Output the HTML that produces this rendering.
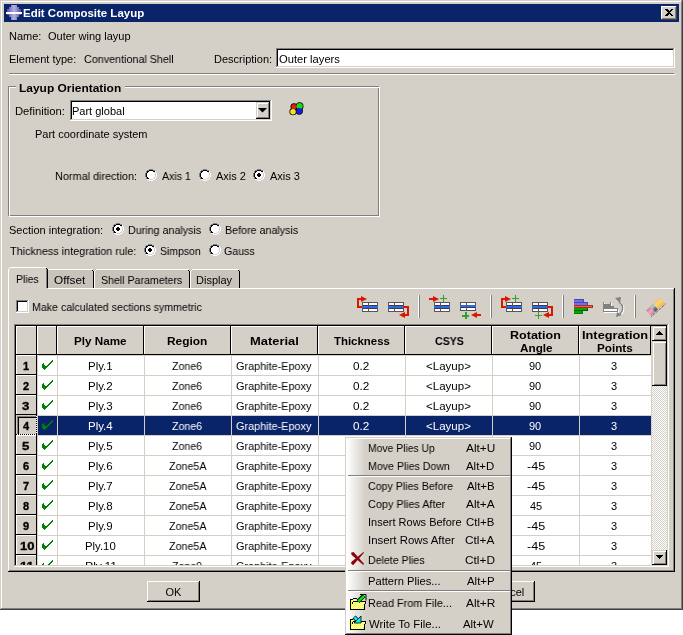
<!DOCTYPE html>
<html><head><meta charset="utf-8"><style>
html,body{margin:0;padding:0;background:#fff;}
body{width:683px;height:635px;position:relative;overflow:hidden;}
body div, body svg{position:absolute;}
.t{will-change:transform;font-family:"Liberation Sans",sans-serif;font-size:11px;line-height:13px;white-space:nowrap;color:#000;}
</style></head><body>
<div style="left:0px;top:0px;width:683px;height:610px;background:#d4d0c8;"></div>
<div style="left:0px;top:0px;width:683px;height:1px;background:#d4d0c8;"></div>
<div style="left:0px;top:0px;width:1px;height:610px;background:#d4d0c8;"></div>
<div style="left:1px;top:1px;width:681px;height:1px;background:#ffffff;"></div>
<div style="left:1px;top:1px;width:1px;height:608px;background:#ffffff;"></div>
<div style="left:0px;top:609px;width:683px;height:1px;background:#404040;"></div>
<div style="left:682px;top:0px;width:1px;height:610px;background:#404040;"></div>
<div style="left:1px;top:608px;width:681px;height:1px;background:#808080;"></div>
<div style="left:681px;top:1px;width:1px;height:608px;background:#808080;"></div>
<div style="left:4px;top:4px;width:675px;height:18px;background:#0a246a;"></div>
<div class="t" style="left:22.96px;top:7px;font-weight:bold;transform:scaleX(1.0435);transform-origin:0 0;color:#fff;">Edit Composite Layup</div>
<svg style="left:6px;top:5px" width="16" height="16" viewBox="0 0 16 16" shape-rendering="crispEdges"><defs><linearGradient id="pg" x1="0" x2="1"><stop offset="0" stop-color="#50509a"/><stop offset="0.5" stop-color="#b8b0e8"/><stop offset="1" stop-color="#50509a"/></linearGradient></defs><polygon points="5,0 11,0 11,2 13,2 13,4 15,4 15,10 13,10 13,12 11,12 11,15 5,15 5,12 3,12 3,10 1,10 1,4 3,4 3,2 5,2" fill="url(#pg)"/><rect x="0" y="7" width="16" height="2" fill="#fff"/></svg>
<div style="left:661px;top:6px;width:16px;height:14px;background:#d4d0c8;"></div>
<div style="left:661px;top:6px;width:16px;height:1px;background:#ffffff;"></div>
<div style="left:661px;top:6px;width:1px;height:14px;background:#ffffff;"></div>
<div style="left:662px;top:7px;width:14px;height:1px;background:#d4d0c8;"></div>
<div style="left:662px;top:7px;width:1px;height:12px;background:#d4d0c8;"></div>
<div style="left:661px;top:19px;width:16px;height:1px;background:#404040;"></div>
<div style="left:676px;top:6px;width:1px;height:14px;background:#404040;"></div>
<div style="left:662px;top:18px;width:14px;height:1px;background:#808080;"></div>
<div style="left:675px;top:7px;width:1px;height:12px;background:#808080;"></div>
<svg style="left:665px;top:9px" width="8" height="7" viewBox="0 0 8 7" shape-rendering="crispEdges"><path d="M0 0h2l2 2 2-2h2v1l-3 2.5 3 2.5v1h-2l-2-2-2 2h-2v-1l3-2.5-3-2.5z" fill="#000"/></svg>
<div class="t" style="left:9px;top:30px;">Name:</div>
<div class="t" style="left:48px;top:30px;">Outer wing layup</div>
<div class="t" style="left:9px;top:53px;">Element type:</div>
<div class="t" style="left:84.02px;top:53px;transform:scaleX(0.9778);transform-origin:0 0;">Conventional Shell</div>
<div class="t" style="left:214px;top:53px;">Description:</div>
<div style="left:276px;top:48px;width:399px;height:20px;background:#ffffff;"></div>
<div style="left:276px;top:48px;width:399px;height:1px;background:#808080;"></div>
<div style="left:276px;top:48px;width:1px;height:20px;background:#808080;"></div>
<div style="left:277px;top:49px;width:397px;height:1px;background:#000000;"></div>
<div style="left:277px;top:49px;width:1px;height:18px;background:#000000;"></div>
<div style="left:276px;top:67px;width:399px;height:1px;background:#ffffff;"></div>
<div style="left:674px;top:48px;width:1px;height:20px;background:#ffffff;"></div>
<div style="left:277px;top:66px;width:397px;height:1px;background:#d4d0c8;"></div>
<div style="left:673px;top:49px;width:1px;height:18px;background:#d4d0c8;"></div>
<div class="t" style="left:278.98px;top:53px;transform:scaleX(1.0169);transform-origin:0 0;">Outer layers</div>
<div style="left:9px;top:73px;width:665px;height:1px;background:#808080;"></div>
<div style="left:9px;top:74px;width:666px;height:1px;background:#ffffff;"></div>
<div style="left:8px;top:86px;width:371px;height:1px;background:#808080;"></div>
<div style="left:8px;top:86px;width:1px;height:130px;background:#808080;"></div>
<div style="left:8px;top:215px;width:371px;height:1px;background:#808080;"></div>
<div style="left:378px;top:86px;width:1px;height:130px;background:#808080;"></div>
<div style="left:9px;top:87px;width:371px;height:1px;background:#ffffff;"></div>
<div style="left:9px;top:87px;width:1px;height:130px;background:#ffffff;"></div>
<div style="left:9px;top:216px;width:371px;height:1px;background:#ffffff;"></div>
<div style="left:379px;top:87px;width:1px;height:130px;background:#ffffff;"></div>
<div style="left:16px;top:80px;width:109px;height:12px;background:#d4d0c8;"></div>
<div class="t" style="left:18.91px;top:82px;font-weight:bold;transform:scaleX(1.0860);transform-origin:0 0;">Layup Orientation</div>
<div class="t" style="left:14.98px;top:105px;transform:scaleX(1.0213);transform-origin:0 0;">Definition:</div>
<div style="left:70px;top:100px;width:202px;height:21px;background:#ffffff;"></div>
<div style="left:70px;top:100px;width:202px;height:1px;background:#808080;"></div>
<div style="left:70px;top:100px;width:1px;height:21px;background:#808080;"></div>
<div style="left:71px;top:101px;width:200px;height:1px;background:#000000;"></div>
<div style="left:71px;top:101px;width:1px;height:19px;background:#000000;"></div>
<div style="left:70px;top:120px;width:202px;height:1px;background:#ffffff;"></div>
<div style="left:271px;top:100px;width:1px;height:21px;background:#ffffff;"></div>
<div style="left:71px;top:119px;width:200px;height:1px;background:#d4d0c8;"></div>
<div style="left:270px;top:101px;width:1px;height:19px;background:#d4d0c8;"></div>
<div class="t" style="left:72px;top:105px;">Part global</div>
<div style="left:256px;top:102px;width:14px;height:17px;background:#d4d0c8;"></div>
<div style="left:256px;top:102px;width:14px;height:1px;background:#d4d0c8;"></div>
<div style="left:256px;top:102px;width:1px;height:17px;background:#d4d0c8;"></div>
<div style="left:257px;top:103px;width:12px;height:1px;background:#ffffff;"></div>
<div style="left:257px;top:103px;width:1px;height:15px;background:#ffffff;"></div>
<div style="left:256px;top:118px;width:14px;height:1px;background:#000000;"></div>
<div style="left:269px;top:102px;width:1px;height:17px;background:#000000;"></div>
<div style="left:257px;top:117px;width:12px;height:1px;background:#808080;"></div>
<div style="left:268px;top:103px;width:1px;height:15px;background:#808080;"></div>
<svg style="left:258px;top:108px" width="9" height="5" viewBox="0 0 9 5" shape-rendering="crispEdges"><polygon points="0,0 9,0 4.5,4.5" fill="#000" shape-rendering="geometricPrecision"/></svg>
<svg style="left:288px;top:101px" width="17" height="16" viewBox="0 0 17 16" shape-rendering="crispEdges"><g shape-rendering="geometricPrecision"><circle cx="6" cy="5.8" r="3.5" fill="#000"/><circle cx="11.6" cy="5.2" r="3.9" fill="#000"/><circle cx="5" cy="10.7" r="3.6" fill="#000"/><circle cx="11.2" cy="10" r="3.7" fill="#000"/><circle cx="6" cy="5.8" r="2.7" fill="#e81818"/><circle cx="11.6" cy="5.2" r="3.1" fill="#10e010"/><circle cx="5" cy="10.7" r="2.8" fill="#f0e818"/><circle cx="11.2" cy="10" r="2.9" fill="#1818f0"/></g></svg>
<div class="t" style="left:35px;top:128px;">Part coordinate system</div>
<div class="t" style="left:55.01px;top:170px;transform:scaleX(0.9877);transform-origin:0 0;">Normal direction:</div>
<svg style="left:145px;top:169px" width="12" height="12" viewBox="0 0 12 12" shape-rendering="crispEdges"><g><rect x="4" y="2" width="4" height="1" fill="#ffffff"/><rect x="3" y="3" width="6" height="1" fill="#ffffff"/><rect x="2" y="4" width="8" height="1" fill="#ffffff"/><rect x="2" y="5" width="8" height="1" fill="#ffffff"/><rect x="2" y="6" width="8" height="1" fill="#ffffff"/><rect x="2" y="7" width="8" height="1" fill="#ffffff"/><rect x="3" y="8" width="6" height="1" fill="#ffffff"/><rect x="4" y="9" width="4" height="1" fill="#ffffff"/><rect x="4" y="0" width="4" height="1" fill="#808080"/><rect x="2" y="1" width="2" height="1" fill="#808080"/><rect x="1" y="2" width="1" height="1" fill="#808080"/><rect x="1" y="3" width="1" height="1" fill="#808080"/><rect x="0" y="4" width="1" height="1" fill="#808080"/><rect x="0" y="5" width="1" height="1" fill="#808080"/><rect x="0" y="6" width="1" height="1" fill="#808080"/><rect x="0" y="7" width="1" height="1" fill="#808080"/><rect x="8" y="1" width="2" height="1" fill="#808080"/><rect x="1" y="8" width="1" height="1" fill="#808080"/><rect x="1" y="9" width="1" height="1" fill="#808080"/><rect x="4" y="11" width="4" height="1" fill="#ffffff"/><rect x="8" y="10" width="2" height="1" fill="#ffffff"/><rect x="10" y="9" width="1" height="1" fill="#ffffff"/><rect x="10" y="8" width="1" height="1" fill="#ffffff"/><rect x="11" y="7" width="1" height="1" fill="#ffffff"/><rect x="11" y="6" width="1" height="1" fill="#ffffff"/><rect x="11" y="5" width="1" height="1" fill="#ffffff"/><rect x="11" y="4" width="1" height="1" fill="#ffffff"/><rect x="10" y="3" width="1" height="1" fill="#ffffff"/><rect x="10" y="2" width="1" height="1" fill="#ffffff"/><rect x="2" y="10" width="2" height="1" fill="#ffffff"/><rect x="4" y="1" width="4" height="1" fill="#000000"/><rect x="2" y="2" width="2" height="1" fill="#000000"/><rect x="8" y="2" width="2" height="1" fill="#000000"/><rect x="2" y="3" width="1" height="1" fill="#000000"/><rect x="1" y="4" width="1" height="1" fill="#000000"/><rect x="1" y="5" width="1" height="1" fill="#000000"/><rect x="1" y="6" width="1" height="1" fill="#000000"/><rect x="1" y="7" width="1" height="1" fill="#000000"/><rect x="2" y="8" width="1" height="1" fill="#000000"/><rect x="2" y="9" width="2" height="1" fill="#000000"/><rect x="4" y="10" width="4" height="1" fill="#d4d0c8"/><rect x="8" y="9" width="2" height="1" fill="#d4d0c8"/><rect x="9" y="8" width="1" height="1" fill="#d4d0c8"/><rect x="10" y="7" width="1" height="1" fill="#d4d0c8"/><rect x="10" y="6" width="1" height="1" fill="#d4d0c8"/><rect x="10" y="5" width="1" height="1" fill="#d4d0c8"/><rect x="10" y="4" width="1" height="1" fill="#d4d0c8"/><rect x="9" y="3" width="1" height="1" fill="#d4d0c8"/></g></svg>
<div class="t" style="left:162.00px;top:170px;transform:scaleX(0.9655);transform-origin:0 0;">Axis 1</div>
<svg style="left:199px;top:169px" width="12" height="12" viewBox="0 0 12 12" shape-rendering="crispEdges"><g><rect x="4" y="2" width="4" height="1" fill="#ffffff"/><rect x="3" y="3" width="6" height="1" fill="#ffffff"/><rect x="2" y="4" width="8" height="1" fill="#ffffff"/><rect x="2" y="5" width="8" height="1" fill="#ffffff"/><rect x="2" y="6" width="8" height="1" fill="#ffffff"/><rect x="2" y="7" width="8" height="1" fill="#ffffff"/><rect x="3" y="8" width="6" height="1" fill="#ffffff"/><rect x="4" y="9" width="4" height="1" fill="#ffffff"/><rect x="4" y="0" width="4" height="1" fill="#808080"/><rect x="2" y="1" width="2" height="1" fill="#808080"/><rect x="1" y="2" width="1" height="1" fill="#808080"/><rect x="1" y="3" width="1" height="1" fill="#808080"/><rect x="0" y="4" width="1" height="1" fill="#808080"/><rect x="0" y="5" width="1" height="1" fill="#808080"/><rect x="0" y="6" width="1" height="1" fill="#808080"/><rect x="0" y="7" width="1" height="1" fill="#808080"/><rect x="8" y="1" width="2" height="1" fill="#808080"/><rect x="1" y="8" width="1" height="1" fill="#808080"/><rect x="1" y="9" width="1" height="1" fill="#808080"/><rect x="4" y="11" width="4" height="1" fill="#ffffff"/><rect x="8" y="10" width="2" height="1" fill="#ffffff"/><rect x="10" y="9" width="1" height="1" fill="#ffffff"/><rect x="10" y="8" width="1" height="1" fill="#ffffff"/><rect x="11" y="7" width="1" height="1" fill="#ffffff"/><rect x="11" y="6" width="1" height="1" fill="#ffffff"/><rect x="11" y="5" width="1" height="1" fill="#ffffff"/><rect x="11" y="4" width="1" height="1" fill="#ffffff"/><rect x="10" y="3" width="1" height="1" fill="#ffffff"/><rect x="10" y="2" width="1" height="1" fill="#ffffff"/><rect x="2" y="10" width="2" height="1" fill="#ffffff"/><rect x="4" y="1" width="4" height="1" fill="#000000"/><rect x="2" y="2" width="2" height="1" fill="#000000"/><rect x="8" y="2" width="2" height="1" fill="#000000"/><rect x="2" y="3" width="1" height="1" fill="#000000"/><rect x="1" y="4" width="1" height="1" fill="#000000"/><rect x="1" y="5" width="1" height="1" fill="#000000"/><rect x="1" y="6" width="1" height="1" fill="#000000"/><rect x="1" y="7" width="1" height="1" fill="#000000"/><rect x="2" y="8" width="1" height="1" fill="#000000"/><rect x="2" y="9" width="2" height="1" fill="#000000"/><rect x="4" y="10" width="4" height="1" fill="#d4d0c8"/><rect x="8" y="9" width="2" height="1" fill="#d4d0c8"/><rect x="9" y="8" width="1" height="1" fill="#d4d0c8"/><rect x="10" y="7" width="1" height="1" fill="#d4d0c8"/><rect x="10" y="6" width="1" height="1" fill="#d4d0c8"/><rect x="10" y="5" width="1" height="1" fill="#d4d0c8"/><rect x="10" y="4" width="1" height="1" fill="#d4d0c8"/><rect x="9" y="3" width="1" height="1" fill="#d4d0c8"/></g></svg>
<div class="t" style="left:216.00px;top:170px;transform:scaleX(1.0000);transform-origin:0 0;">Axis 2</div>
<svg style="left:253px;top:169px" width="12" height="12" viewBox="0 0 12 12" shape-rendering="crispEdges"><g><rect x="4" y="2" width="4" height="1" fill="#ffffff"/><rect x="3" y="3" width="6" height="1" fill="#ffffff"/><rect x="2" y="4" width="8" height="1" fill="#ffffff"/><rect x="2" y="5" width="8" height="1" fill="#ffffff"/><rect x="2" y="6" width="8" height="1" fill="#ffffff"/><rect x="2" y="7" width="8" height="1" fill="#ffffff"/><rect x="3" y="8" width="6" height="1" fill="#ffffff"/><rect x="4" y="9" width="4" height="1" fill="#ffffff"/><rect x="4" y="0" width="4" height="1" fill="#808080"/><rect x="2" y="1" width="2" height="1" fill="#808080"/><rect x="1" y="2" width="1" height="1" fill="#808080"/><rect x="1" y="3" width="1" height="1" fill="#808080"/><rect x="0" y="4" width="1" height="1" fill="#808080"/><rect x="0" y="5" width="1" height="1" fill="#808080"/><rect x="0" y="6" width="1" height="1" fill="#808080"/><rect x="0" y="7" width="1" height="1" fill="#808080"/><rect x="8" y="1" width="2" height="1" fill="#808080"/><rect x="1" y="8" width="1" height="1" fill="#808080"/><rect x="1" y="9" width="1" height="1" fill="#808080"/><rect x="4" y="11" width="4" height="1" fill="#ffffff"/><rect x="8" y="10" width="2" height="1" fill="#ffffff"/><rect x="10" y="9" width="1" height="1" fill="#ffffff"/><rect x="10" y="8" width="1" height="1" fill="#ffffff"/><rect x="11" y="7" width="1" height="1" fill="#ffffff"/><rect x="11" y="6" width="1" height="1" fill="#ffffff"/><rect x="11" y="5" width="1" height="1" fill="#ffffff"/><rect x="11" y="4" width="1" height="1" fill="#ffffff"/><rect x="10" y="3" width="1" height="1" fill="#ffffff"/><rect x="10" y="2" width="1" height="1" fill="#ffffff"/><rect x="2" y="10" width="2" height="1" fill="#ffffff"/><rect x="4" y="1" width="4" height="1" fill="#000000"/><rect x="2" y="2" width="2" height="1" fill="#000000"/><rect x="8" y="2" width="2" height="1" fill="#000000"/><rect x="2" y="3" width="1" height="1" fill="#000000"/><rect x="1" y="4" width="1" height="1" fill="#000000"/><rect x="1" y="5" width="1" height="1" fill="#000000"/><rect x="1" y="6" width="1" height="1" fill="#000000"/><rect x="1" y="7" width="1" height="1" fill="#000000"/><rect x="2" y="8" width="1" height="1" fill="#000000"/><rect x="2" y="9" width="2" height="1" fill="#000000"/><rect x="4" y="10" width="4" height="1" fill="#d4d0c8"/><rect x="8" y="9" width="2" height="1" fill="#d4d0c8"/><rect x="9" y="8" width="1" height="1" fill="#d4d0c8"/><rect x="10" y="7" width="1" height="1" fill="#d4d0c8"/><rect x="10" y="6" width="1" height="1" fill="#d4d0c8"/><rect x="10" y="5" width="1" height="1" fill="#d4d0c8"/><rect x="10" y="4" width="1" height="1" fill="#d4d0c8"/><rect x="9" y="3" width="1" height="1" fill="#d4d0c8"/><rect x="5" y="4" width="2" height="1" fill="#000000"/><rect x="4" y="5" width="4" height="1" fill="#000000"/><rect x="4" y="6" width="4" height="1" fill="#000000"/><rect x="5" y="7" width="2" height="1" fill="#000000"/></g></svg>
<div class="t" style="left:270.00px;top:170px;transform:scaleX(1.0000);transform-origin:0 0;">Axis 3</div>
<div class="t" style="left:9px;top:224px;">Section integration:</div>
<svg style="left:112px;top:223px" width="12" height="12" viewBox="0 0 12 12" shape-rendering="crispEdges"><g><rect x="4" y="2" width="4" height="1" fill="#ffffff"/><rect x="3" y="3" width="6" height="1" fill="#ffffff"/><rect x="2" y="4" width="8" height="1" fill="#ffffff"/><rect x="2" y="5" width="8" height="1" fill="#ffffff"/><rect x="2" y="6" width="8" height="1" fill="#ffffff"/><rect x="2" y="7" width="8" height="1" fill="#ffffff"/><rect x="3" y="8" width="6" height="1" fill="#ffffff"/><rect x="4" y="9" width="4" height="1" fill="#ffffff"/><rect x="4" y="0" width="4" height="1" fill="#808080"/><rect x="2" y="1" width="2" height="1" fill="#808080"/><rect x="1" y="2" width="1" height="1" fill="#808080"/><rect x="1" y="3" width="1" height="1" fill="#808080"/><rect x="0" y="4" width="1" height="1" fill="#808080"/><rect x="0" y="5" width="1" height="1" fill="#808080"/><rect x="0" y="6" width="1" height="1" fill="#808080"/><rect x="0" y="7" width="1" height="1" fill="#808080"/><rect x="8" y="1" width="2" height="1" fill="#808080"/><rect x="1" y="8" width="1" height="1" fill="#808080"/><rect x="1" y="9" width="1" height="1" fill="#808080"/><rect x="4" y="11" width="4" height="1" fill="#ffffff"/><rect x="8" y="10" width="2" height="1" fill="#ffffff"/><rect x="10" y="9" width="1" height="1" fill="#ffffff"/><rect x="10" y="8" width="1" height="1" fill="#ffffff"/><rect x="11" y="7" width="1" height="1" fill="#ffffff"/><rect x="11" y="6" width="1" height="1" fill="#ffffff"/><rect x="11" y="5" width="1" height="1" fill="#ffffff"/><rect x="11" y="4" width="1" height="1" fill="#ffffff"/><rect x="10" y="3" width="1" height="1" fill="#ffffff"/><rect x="10" y="2" width="1" height="1" fill="#ffffff"/><rect x="2" y="10" width="2" height="1" fill="#ffffff"/><rect x="4" y="1" width="4" height="1" fill="#000000"/><rect x="2" y="2" width="2" height="1" fill="#000000"/><rect x="8" y="2" width="2" height="1" fill="#000000"/><rect x="2" y="3" width="1" height="1" fill="#000000"/><rect x="1" y="4" width="1" height="1" fill="#000000"/><rect x="1" y="5" width="1" height="1" fill="#000000"/><rect x="1" y="6" width="1" height="1" fill="#000000"/><rect x="1" y="7" width="1" height="1" fill="#000000"/><rect x="2" y="8" width="1" height="1" fill="#000000"/><rect x="2" y="9" width="2" height="1" fill="#000000"/><rect x="4" y="10" width="4" height="1" fill="#d4d0c8"/><rect x="8" y="9" width="2" height="1" fill="#d4d0c8"/><rect x="9" y="8" width="1" height="1" fill="#d4d0c8"/><rect x="10" y="7" width="1" height="1" fill="#d4d0c8"/><rect x="10" y="6" width="1" height="1" fill="#d4d0c8"/><rect x="10" y="5" width="1" height="1" fill="#d4d0c8"/><rect x="10" y="4" width="1" height="1" fill="#d4d0c8"/><rect x="9" y="3" width="1" height="1" fill="#d4d0c8"/><rect x="5" y="4" width="2" height="1" fill="#000000"/><rect x="4" y="5" width="4" height="1" fill="#000000"/><rect x="4" y="6" width="4" height="1" fill="#000000"/><rect x="5" y="7" width="2" height="1" fill="#000000"/></g></svg>
<div class="t" style="left:128.03px;top:224px;transform:scaleX(0.9730);transform-origin:0 0;">During analysis</div>
<svg style="left:209px;top:223px" width="12" height="12" viewBox="0 0 12 12" shape-rendering="crispEdges"><g><rect x="4" y="2" width="4" height="1" fill="#ffffff"/><rect x="3" y="3" width="6" height="1" fill="#ffffff"/><rect x="2" y="4" width="8" height="1" fill="#ffffff"/><rect x="2" y="5" width="8" height="1" fill="#ffffff"/><rect x="2" y="6" width="8" height="1" fill="#ffffff"/><rect x="2" y="7" width="8" height="1" fill="#ffffff"/><rect x="3" y="8" width="6" height="1" fill="#ffffff"/><rect x="4" y="9" width="4" height="1" fill="#ffffff"/><rect x="4" y="0" width="4" height="1" fill="#808080"/><rect x="2" y="1" width="2" height="1" fill="#808080"/><rect x="1" y="2" width="1" height="1" fill="#808080"/><rect x="1" y="3" width="1" height="1" fill="#808080"/><rect x="0" y="4" width="1" height="1" fill="#808080"/><rect x="0" y="5" width="1" height="1" fill="#808080"/><rect x="0" y="6" width="1" height="1" fill="#808080"/><rect x="0" y="7" width="1" height="1" fill="#808080"/><rect x="8" y="1" width="2" height="1" fill="#808080"/><rect x="1" y="8" width="1" height="1" fill="#808080"/><rect x="1" y="9" width="1" height="1" fill="#808080"/><rect x="4" y="11" width="4" height="1" fill="#ffffff"/><rect x="8" y="10" width="2" height="1" fill="#ffffff"/><rect x="10" y="9" width="1" height="1" fill="#ffffff"/><rect x="10" y="8" width="1" height="1" fill="#ffffff"/><rect x="11" y="7" width="1" height="1" fill="#ffffff"/><rect x="11" y="6" width="1" height="1" fill="#ffffff"/><rect x="11" y="5" width="1" height="1" fill="#ffffff"/><rect x="11" y="4" width="1" height="1" fill="#ffffff"/><rect x="10" y="3" width="1" height="1" fill="#ffffff"/><rect x="10" y="2" width="1" height="1" fill="#ffffff"/><rect x="2" y="10" width="2" height="1" fill="#ffffff"/><rect x="4" y="1" width="4" height="1" fill="#000000"/><rect x="2" y="2" width="2" height="1" fill="#000000"/><rect x="8" y="2" width="2" height="1" fill="#000000"/><rect x="2" y="3" width="1" height="1" fill="#000000"/><rect x="1" y="4" width="1" height="1" fill="#000000"/><rect x="1" y="5" width="1" height="1" fill="#000000"/><rect x="1" y="6" width="1" height="1" fill="#000000"/><rect x="1" y="7" width="1" height="1" fill="#000000"/><rect x="2" y="8" width="1" height="1" fill="#000000"/><rect x="2" y="9" width="2" height="1" fill="#000000"/><rect x="4" y="10" width="4" height="1" fill="#d4d0c8"/><rect x="8" y="9" width="2" height="1" fill="#d4d0c8"/><rect x="9" y="8" width="1" height="1" fill="#d4d0c8"/><rect x="10" y="7" width="1" height="1" fill="#d4d0c8"/><rect x="10" y="6" width="1" height="1" fill="#d4d0c8"/><rect x="10" y="5" width="1" height="1" fill="#d4d0c8"/><rect x="10" y="4" width="1" height="1" fill="#d4d0c8"/><rect x="9" y="3" width="1" height="1" fill="#d4d0c8"/></g></svg>
<div class="t" style="left:225.03px;top:224px;transform:scaleX(0.9730);transform-origin:0 0;">Before analysis</div>
<div class="t" style="left:10.00px;top:245px;transform:scaleX(0.9843);transform-origin:0 0;">Thickness integration rule:</div>
<svg style="left:144px;top:244px" width="12" height="12" viewBox="0 0 12 12" shape-rendering="crispEdges"><g><rect x="4" y="2" width="4" height="1" fill="#ffffff"/><rect x="3" y="3" width="6" height="1" fill="#ffffff"/><rect x="2" y="4" width="8" height="1" fill="#ffffff"/><rect x="2" y="5" width="8" height="1" fill="#ffffff"/><rect x="2" y="6" width="8" height="1" fill="#ffffff"/><rect x="2" y="7" width="8" height="1" fill="#ffffff"/><rect x="3" y="8" width="6" height="1" fill="#ffffff"/><rect x="4" y="9" width="4" height="1" fill="#ffffff"/><rect x="4" y="0" width="4" height="1" fill="#808080"/><rect x="2" y="1" width="2" height="1" fill="#808080"/><rect x="1" y="2" width="1" height="1" fill="#808080"/><rect x="1" y="3" width="1" height="1" fill="#808080"/><rect x="0" y="4" width="1" height="1" fill="#808080"/><rect x="0" y="5" width="1" height="1" fill="#808080"/><rect x="0" y="6" width="1" height="1" fill="#808080"/><rect x="0" y="7" width="1" height="1" fill="#808080"/><rect x="8" y="1" width="2" height="1" fill="#808080"/><rect x="1" y="8" width="1" height="1" fill="#808080"/><rect x="1" y="9" width="1" height="1" fill="#808080"/><rect x="4" y="11" width="4" height="1" fill="#ffffff"/><rect x="8" y="10" width="2" height="1" fill="#ffffff"/><rect x="10" y="9" width="1" height="1" fill="#ffffff"/><rect x="10" y="8" width="1" height="1" fill="#ffffff"/><rect x="11" y="7" width="1" height="1" fill="#ffffff"/><rect x="11" y="6" width="1" height="1" fill="#ffffff"/><rect x="11" y="5" width="1" height="1" fill="#ffffff"/><rect x="11" y="4" width="1" height="1" fill="#ffffff"/><rect x="10" y="3" width="1" height="1" fill="#ffffff"/><rect x="10" y="2" width="1" height="1" fill="#ffffff"/><rect x="2" y="10" width="2" height="1" fill="#ffffff"/><rect x="4" y="1" width="4" height="1" fill="#000000"/><rect x="2" y="2" width="2" height="1" fill="#000000"/><rect x="8" y="2" width="2" height="1" fill="#000000"/><rect x="2" y="3" width="1" height="1" fill="#000000"/><rect x="1" y="4" width="1" height="1" fill="#000000"/><rect x="1" y="5" width="1" height="1" fill="#000000"/><rect x="1" y="6" width="1" height="1" fill="#000000"/><rect x="1" y="7" width="1" height="1" fill="#000000"/><rect x="2" y="8" width="1" height="1" fill="#000000"/><rect x="2" y="9" width="2" height="1" fill="#000000"/><rect x="4" y="10" width="4" height="1" fill="#d4d0c8"/><rect x="8" y="9" width="2" height="1" fill="#d4d0c8"/><rect x="9" y="8" width="1" height="1" fill="#d4d0c8"/><rect x="10" y="7" width="1" height="1" fill="#d4d0c8"/><rect x="10" y="6" width="1" height="1" fill="#d4d0c8"/><rect x="10" y="5" width="1" height="1" fill="#d4d0c8"/><rect x="10" y="4" width="1" height="1" fill="#d4d0c8"/><rect x="9" y="3" width="1" height="1" fill="#d4d0c8"/><rect x="5" y="4" width="2" height="1" fill="#000000"/><rect x="4" y="5" width="4" height="1" fill="#000000"/><rect x="4" y="6" width="4" height="1" fill="#000000"/><rect x="5" y="7" width="2" height="1" fill="#000000"/></g></svg>
<div class="t" style="left:160.05px;top:245px;transform:scaleX(0.9512);transform-origin:0 0;">Simpson</div>
<svg style="left:209px;top:244px" width="12" height="12" viewBox="0 0 12 12" shape-rendering="crispEdges"><g><rect x="4" y="2" width="4" height="1" fill="#ffffff"/><rect x="3" y="3" width="6" height="1" fill="#ffffff"/><rect x="2" y="4" width="8" height="1" fill="#ffffff"/><rect x="2" y="5" width="8" height="1" fill="#ffffff"/><rect x="2" y="6" width="8" height="1" fill="#ffffff"/><rect x="2" y="7" width="8" height="1" fill="#ffffff"/><rect x="3" y="8" width="6" height="1" fill="#ffffff"/><rect x="4" y="9" width="4" height="1" fill="#ffffff"/><rect x="4" y="0" width="4" height="1" fill="#808080"/><rect x="2" y="1" width="2" height="1" fill="#808080"/><rect x="1" y="2" width="1" height="1" fill="#808080"/><rect x="1" y="3" width="1" height="1" fill="#808080"/><rect x="0" y="4" width="1" height="1" fill="#808080"/><rect x="0" y="5" width="1" height="1" fill="#808080"/><rect x="0" y="6" width="1" height="1" fill="#808080"/><rect x="0" y="7" width="1" height="1" fill="#808080"/><rect x="8" y="1" width="2" height="1" fill="#808080"/><rect x="1" y="8" width="1" height="1" fill="#808080"/><rect x="1" y="9" width="1" height="1" fill="#808080"/><rect x="4" y="11" width="4" height="1" fill="#ffffff"/><rect x="8" y="10" width="2" height="1" fill="#ffffff"/><rect x="10" y="9" width="1" height="1" fill="#ffffff"/><rect x="10" y="8" width="1" height="1" fill="#ffffff"/><rect x="11" y="7" width="1" height="1" fill="#ffffff"/><rect x="11" y="6" width="1" height="1" fill="#ffffff"/><rect x="11" y="5" width="1" height="1" fill="#ffffff"/><rect x="11" y="4" width="1" height="1" fill="#ffffff"/><rect x="10" y="3" width="1" height="1" fill="#ffffff"/><rect x="10" y="2" width="1" height="1" fill="#ffffff"/><rect x="2" y="10" width="2" height="1" fill="#ffffff"/><rect x="4" y="1" width="4" height="1" fill="#000000"/><rect x="2" y="2" width="2" height="1" fill="#000000"/><rect x="8" y="2" width="2" height="1" fill="#000000"/><rect x="2" y="3" width="1" height="1" fill="#000000"/><rect x="1" y="4" width="1" height="1" fill="#000000"/><rect x="1" y="5" width="1" height="1" fill="#000000"/><rect x="1" y="6" width="1" height="1" fill="#000000"/><rect x="1" y="7" width="1" height="1" fill="#000000"/><rect x="2" y="8" width="1" height="1" fill="#000000"/><rect x="2" y="9" width="2" height="1" fill="#000000"/><rect x="4" y="10" width="4" height="1" fill="#d4d0c8"/><rect x="8" y="9" width="2" height="1" fill="#d4d0c8"/><rect x="9" y="8" width="1" height="1" fill="#d4d0c8"/><rect x="10" y="7" width="1" height="1" fill="#d4d0c8"/><rect x="10" y="6" width="1" height="1" fill="#d4d0c8"/><rect x="10" y="5" width="1" height="1" fill="#d4d0c8"/><rect x="10" y="4" width="1" height="1" fill="#d4d0c8"/><rect x="9" y="3" width="1" height="1" fill="#d4d0c8"/></g></svg>
<div class="t" style="left:224.03px;top:245px;transform:scaleX(0.9667);transform-origin:0 0;">Gauss</div>
<div style="left:8px;top:288px;width:667px;height:284px;background:#d4d0c8;"></div>
<div style="left:8px;top:288px;width:667px;height:1px;background:#ffffff;"></div>
<div style="left:8px;top:288px;width:1px;height:284px;background:#ffffff;"></div>
<div style="left:8px;top:571px;width:667px;height:1px;background:#000000;"></div>
<div style="left:674px;top:288px;width:1px;height:284px;background:#000000;"></div>
<div style="left:9px;top:570px;width:665px;height:1px;background:#808080;"></div>
<div style="left:673px;top:289px;width:1px;height:282px;background:#808080;"></div>
<div style="left:48px;top:269px;width:46px;height:19px;background:#c8c4bc;"></div>
<div style="left:48px;top:269px;width:45px;height:1px;background:#ffffff;"></div>
<div style="left:93px;top:271px;width:1px;height:17px;background:#000000;"></div>
<div style="left:92px;top:270px;width:1px;height:1px;background:#000000;"></div>
<div class="t" style="left:53.93px;top:274px;transform:scaleX(1.0714);transform-origin:0 0;">Offset</div>
<div style="left:94px;top:269px;width:96px;height:19px;background:#c8c4bc;"></div>
<div style="left:96px;top:269px;width:93px;height:1px;background:#ffffff;"></div>
<div style="left:94px;top:271px;width:1px;height:17px;background:#ffffff;"></div>
<div style="left:95px;top:270px;width:1px;height:1px;background:#ffffff;"></div>
<div style="left:189px;top:271px;width:1px;height:17px;background:#000000;"></div>
<div style="left:188px;top:270px;width:1px;height:1px;background:#000000;"></div>
<div class="t" style="left:101.04px;top:274px;transform:scaleX(0.9639);transform-origin:0 0;">Shell Parameters</div>
<div style="left:190px;top:269px;width:50px;height:19px;background:#c8c4bc;"></div>
<div style="left:192px;top:269px;width:47px;height:1px;background:#ffffff;"></div>
<div style="left:190px;top:271px;width:1px;height:17px;background:#ffffff;"></div>
<div style="left:191px;top:270px;width:1px;height:1px;background:#ffffff;"></div>
<div style="left:239px;top:271px;width:1px;height:17px;background:#000000;"></div>
<div style="left:238px;top:270px;width:1px;height:1px;background:#000000;"></div>
<div class="t" style="left:196.00px;top:274px;transform:scaleX(1.0000);transform-origin:0 0;">Display</div>
<div style="left:8px;top:267px;width:40px;height:22px;background:#d4d0c8;"></div>
<div style="left:10px;top:267px;width:36px;height:1px;background:#ffffff;"></div>
<div style="left:8px;top:269px;width:1px;height:20px;background:#ffffff;"></div>
<div style="left:9px;top:268px;width:1px;height:1px;background:#ffffff;"></div>
<div style="left:47px;top:269px;width:1px;height:19px;background:#000000;"></div>
<div style="left:46px;top:268px;width:1px;height:1px;background:#000000;"></div>
<div style="left:46px;top:269px;width:1px;height:19px;background:#808080;"></div>
<div class="t" style="left:16.05px;top:273px;transform:scaleX(0.9545);transform-origin:0 0;">Plies</div>
<div style="left:16px;top:300px;width:13px;height:13px;background:#ffffff;"></div>
<div style="left:16px;top:300px;width:13px;height:1px;background:#808080;"></div>
<div style="left:16px;top:300px;width:1px;height:13px;background:#808080;"></div>
<div style="left:17px;top:301px;width:11px;height:1px;background:#000000;"></div>
<div style="left:17px;top:301px;width:1px;height:11px;background:#000000;"></div>
<div style="left:16px;top:312px;width:13px;height:1px;background:#ffffff;"></div>
<div style="left:28px;top:300px;width:1px;height:13px;background:#ffffff;"></div>
<div style="left:17px;top:311px;width:11px;height:1px;background:#d4d0c8;"></div>
<div style="left:27px;top:301px;width:1px;height:11px;background:#d4d0c8;"></div>
<div class="t" style="left:32.03px;top:301px;transform:scaleX(0.9655);transform-origin:0 0;">Make calculated sections symmetric</div>
<div style="left:418px;top:295px;width:1px;height:23px;background:#ffffff;"></div>
<div style="left:419px;top:295px;width:1px;height:23px;background:#808080;"></div>
<div style="left:490px;top:295px;width:1px;height:23px;background:#ffffff;"></div>
<div style="left:491px;top:295px;width:1px;height:23px;background:#808080;"></div>
<div style="left:562px;top:295px;width:1px;height:23px;background:#ffffff;"></div>
<div style="left:563px;top:295px;width:1px;height:23px;background:#808080;"></div>
<div style="left:634px;top:295px;width:1px;height:23px;background:#ffffff;"></div>
<div style="left:635px;top:295px;width:1px;height:23px;background:#808080;"></div>
<svg style="left:350px;top:290px" width="330" height="32" shape-rendering="crispEdges"><rect x="12" y="12" width="16" height="10" fill="#555555"/><rect x="13" y="13" width="14" height="2" fill="#ffffff"/><rect x="13" y="15" width="14" height="1" fill="#3a3a50"/><rect x="12" y="16" width="16" height="2" fill="#2a6af0"/><rect x="13" y="18" width="14" height="1" fill="#3a3a50"/><rect x="13" y="19" width="14" height="2" fill="#ffffff"/><rect x="18" y="13" width="1" height="8" fill="#555555"/><rect x="7" y="8" width="2" height="10" fill="#d81800"/><rect x="7" y="8" width="5" height="2" fill="#d81800"/><rect x="7" y="16" width="5" height="2" fill="#d81800"/><polygon points="11,6 17,9 11,12" fill="#d81800" shape-rendering="geometricPrecision"/><rect x="38" y="12" width="16" height="10" fill="#555555"/><rect x="39" y="13" width="14" height="2" fill="#ffffff"/><rect x="39" y="15" width="14" height="1" fill="#3a3a50"/><rect x="38" y="16" width="16" height="2" fill="#2a6af0"/><rect x="39" y="18" width="14" height="1" fill="#3a3a50"/><rect x="39" y="19" width="14" height="2" fill="#ffffff"/><rect x="44" y="13" width="1" height="8" fill="#555555"/><rect x="53" y="16" width="6" height="2" fill="#d81800"/><rect x="57" y="16" width="2" height="10" fill="#d81800"/><rect x="53" y="24" width="6" height="2" fill="#d81800"/><polygon points="49,25 55,22 55,28" fill="#d81800" shape-rendering="geometricPrecision"/><rect x="84" y="12" width="16" height="10" fill="#555555"/><rect x="85" y="13" width="14" height="2" fill="#ffffff"/><rect x="85" y="15" width="14" height="1" fill="#3a3a50"/><rect x="84" y="16" width="16" height="2" fill="#2a6af0"/><rect x="85" y="18" width="14" height="1" fill="#3a3a50"/><rect x="85" y="19" width="14" height="2" fill="#ffffff"/><rect x="90" y="13" width="1" height="8" fill="#555555"/><rect x="79" y="8" width="5" height="2" fill="#d81800"/><polygon points="83,6 89,9 83,12" fill="#d81800" shape-rendering="geometricPrecision"/><rect x="90" y="8" width="7" height="1" fill="#30a030"/><rect x="93" y="5" width="1" height="7" fill="#30a030"/><rect x="110" y="12" width="16" height="9" fill="#555555"/><rect x="111" y="13" width="14" height="2" fill="#ffffff"/><rect x="111" y="15" width="14" height="1" fill="#3a3a50"/><rect x="110" y="15" width="16" height="2" fill="#2a6af0"/><rect x="111" y="17" width="14" height="1" fill="#3a3a50"/><rect x="111" y="18" width="14" height="2" fill="#ffffff"/><rect x="116" y="13" width="1" height="7" fill="#555555"/><rect x="112" y="25" width="7" height="2" fill="#30a030"/><rect x="115" y="22" width="2" height="7" fill="#30a030"/><rect x="125" y="24" width="6" height="2" fill="#d81800"/><polygon points="121,25 127,22 127,28" fill="#d81800" shape-rendering="geometricPrecision"/><rect x="156" y="12" width="16" height="10" fill="#555555"/><rect x="157" y="13" width="14" height="2" fill="#ffffff"/><rect x="157" y="15" width="14" height="1" fill="#3a3a50"/><rect x="156" y="16" width="16" height="2" fill="#2a6af0"/><rect x="157" y="18" width="14" height="1" fill="#3a3a50"/><rect x="157" y="19" width="14" height="2" fill="#ffffff"/><rect x="162" y="13" width="1" height="8" fill="#555555"/><rect x="151" y="8" width="2" height="10" fill="#d81800"/><rect x="151" y="8" width="5" height="2" fill="#d81800"/><rect x="151" y="16" width="5" height="2" fill="#d81800"/><polygon points="155,6 161,9 155,12" fill="#d81800" shape-rendering="geometricPrecision"/><rect x="162" y="8" width="7" height="1" fill="#30a030"/><rect x="165" y="5" width="1" height="7" fill="#30a030"/><rect x="182" y="12" width="16" height="10" fill="#555555"/><rect x="183" y="13" width="14" height="2" fill="#ffffff"/><rect x="183" y="15" width="14" height="1" fill="#3a3a50"/><rect x="182" y="16" width="16" height="2" fill="#2a6af0"/><rect x="183" y="18" width="14" height="1" fill="#3a3a50"/><rect x="183" y="19" width="14" height="2" fill="#ffffff"/><rect x="188" y="13" width="1" height="8" fill="#555555"/><rect x="197" y="16" width="6" height="2" fill="#d81800"/><rect x="201" y="16" width="2" height="10" fill="#d81800"/><rect x="197" y="24" width="6" height="2" fill="#d81800"/><polygon points="193,25 199,22 199,28" fill="#d81800" shape-rendering="geometricPrecision"/><rect x="185" y="25" width="7" height="1" fill="#30a030"/><rect x="188" y="22" width="1" height="7" fill="#30a030"/><rect x="224" y="9" width="10" height="3" fill="#4848b0"/><rect x="224" y="10" width="9" height="2" fill="#7070f0"/><rect x="224" y="12" width="14" height="3" fill="#4848b0"/><rect x="224" y="13" width="13" height="2" fill="#7070f0"/><rect x="224" y="15" width="19" height="3" fill="#a83020"/><rect x="224" y="16" width="18" height="1" fill="#f06050"/><rect x="224" y="18" width="14" height="3" fill="#006000"/><rect x="224" y="18" width="13" height="2" fill="#00a800"/><rect x="224" y="21" width="9" height="3" fill="#008000"/><rect x="224" y="21" width="8" height="2" fill="#00a800"/><rect x="254" y="13" width="1" height="10" fill="#ffffff"/><rect x="261" y="13" width="1" height="3" fill="#ffffff"/><rect x="255" y="20" width="14" height="3" fill="#ffffff"/><rect x="253" y="12" width="1" height="10" fill="#808080"/><rect x="260" y="12" width="1" height="3" fill="#808080"/><rect x="253" y="14" width="8" height="4" fill="#808080"/><rect x="253" y="16" width="11" height="2" fill="#808080"/><rect x="253" y="18" width="15" height="1" fill="#808080"/><rect x="253" y="21" width="15" height="1" fill="#808080"/><rect x="267" y="18" width="1" height="4" fill="#808080"/><rect x="254" y="19" width="13" height="2" fill="#ffffff"/><g shape-rendering="geometricPrecision"><path d="M269 12Q276 17.5 270 24" stroke="#fff" stroke-width="1.3" fill="none" transform="translate(1,1)"/><path d="M269 12Q276 17.5 270 24" stroke="#808080" stroke-width="1.3" fill="none"/><polygon points="265,8 271,7 270,13" fill="#808080"/><polygon points="266,27 267,22 272,25" fill="#808080"/></g><g transform="translate(292,4)" shape-rendering="geometricPrecision"><path d="M9.5 22.5L23.5 10" stroke="#202020" stroke-width="0.9" stroke-dasharray="1 1"/><defs><linearGradient id="og" x1="0" y1="0" x2="1" y2="1"><stop offset="0" stop-color="#f0a040"/><stop offset="0.45" stop-color="#f8d870"/><stop offset="1" stop-color="#f09038"/></linearGradient><linearGradient id="gg" x1="0" y1="0" x2="1" y2="1"><stop offset="0" stop-color="#7a8a98"/><stop offset="0.35" stop-color="#c0ccd8"/><stop offset="0.6" stop-color="#607080"/><stop offset="1" stop-color="#405060"/></linearGradient><linearGradient id="kg" x1="0" y1="0" x2="1" y2="1"><stop offset="0" stop-color="#c06080"/><stop offset="0.5" stop-color="#f0a8b8"/><stop offset="1" stop-color="#c05878"/></linearGradient></defs><polygon points="17.5,4 23,9.5 16,15.2 10.8,10" fill="url(#og)"/><polygon points="10.8,10 16,15.2 13.1,18.2 8,12.9" fill="url(#gg)"/><polygon points="8,12.9 13.1,18.2 9,22 4,16.5" fill="url(#kg)"/></g></svg>
<div style="left:14px;top:324px;width:655px;height:1px;background:#808080;"></div>
<div style="left:14px;top:324px;width:1px;height:243px;background:#808080;"></div>
<div style="left:15px;top:325px;width:653px;height:1px;background:#000000;"></div>
<div style="left:15px;top:325px;width:1px;height:241px;background:#000000;"></div>
<div style="left:14px;top:566px;width:655px;height:1px;background:#ffffff;"></div>
<div style="left:668px;top:324px;width:1px;height:243px;background:#ffffff;"></div>
<div style="left:15px;top:565px;width:653px;height:1px;background:#d4d0c8;"></div>
<div style="left:667px;top:325px;width:1px;height:241px;background:#d4d0c8;"></div>
<div style="left:16px;top:326px;width:651px;height:239px;background:#ffffff;"></div>
<div style="left:16px;top:326px;width:651px;height:239px;overflow:hidden">
<div style="left:0px;top:0px;width:21px;height:29px;background:#d4d0c8"></div>
<div style="left:0px;top:0px;width:21px;height:1px;background:#ffffff"></div>
<div style="left:0px;top:0px;width:1px;height:29px;background:#ffffff"></div>
<div style="left:0px;top:28px;width:21px;height:1px;background:#000000"></div>
<div style="left:20px;top:0px;width:1px;height:29px;background:#000000"></div>
<div style="left:21px;top:0px;width:20px;height:29px;background:#d4d0c8"></div>
<div style="left:21px;top:0px;width:20px;height:1px;background:#ffffff"></div>
<div style="left:21px;top:0px;width:1px;height:29px;background:#ffffff"></div>
<div style="left:21px;top:28px;width:20px;height:1px;background:#000000"></div>
<div style="left:40px;top:0px;width:1px;height:29px;background:#000000"></div>
<div style="left:41px;top:0px;width:87px;height:29px;background:#d4d0c8"></div>
<div style="left:41px;top:0px;width:87px;height:1px;background:#ffffff"></div>
<div style="left:41px;top:0px;width:1px;height:29px;background:#ffffff"></div>
<div style="left:41px;top:28px;width:87px;height:1px;background:#000000"></div>
<div style="left:127px;top:0px;width:1px;height:29px;background:#000000"></div>
<div class="t" style="left:57.94px;top:9px;font-weight:bold;transform:scaleX(1.0625);transform-origin:0 0;">Ply Name</div>
<div style="left:128px;top:0px;width:87px;height:29px;background:#d4d0c8"></div>
<div style="left:128px;top:0px;width:87px;height:1px;background:#ffffff"></div>
<div style="left:128px;top:0px;width:1px;height:29px;background:#ffffff"></div>
<div style="left:128px;top:28px;width:87px;height:1px;background:#000000"></div>
<div style="left:214px;top:0px;width:1px;height:29px;background:#000000"></div>
<div class="t" style="left:150.92px;top:9px;font-weight:bold;transform:scaleX(1.0833);transform-origin:0 0;">Region</div>
<div style="left:215px;top:0px;width:87px;height:29px;background:#d4d0c8"></div>
<div style="left:215px;top:0px;width:87px;height:1px;background:#ffffff"></div>
<div style="left:215px;top:0px;width:1px;height:29px;background:#ffffff"></div>
<div style="left:215px;top:28px;width:87px;height:1px;background:#000000"></div>
<div style="left:301px;top:0px;width:1px;height:29px;background:#000000"></div>
<div class="t" style="left:233.82px;top:9px;font-weight:bold;transform:scaleX(1.1750);transform-origin:0 0;">Material</div>
<div style="left:302px;top:0px;width:87px;height:29px;background:#d4d0c8"></div>
<div style="left:302px;top:0px;width:87px;height:1px;background:#ffffff"></div>
<div style="left:302px;top:0px;width:1px;height:29px;background:#ffffff"></div>
<div style="left:302px;top:28px;width:87px;height:1px;background:#000000"></div>
<div style="left:388px;top:0px;width:1px;height:29px;background:#000000"></div>
<div class="t" style="left:318.00px;top:9px;font-weight:bold;transform:scaleX(1.0377);transform-origin:0 0;">Thickness</div>
<div style="left:389px;top:0px;width:87px;height:29px;background:#d4d0c8"></div>
<div style="left:389px;top:0px;width:87px;height:1px;background:#ffffff"></div>
<div style="left:389px;top:0px;width:1px;height:29px;background:#ffffff"></div>
<div style="left:389px;top:28px;width:87px;height:1px;background:#000000"></div>
<div style="left:475px;top:0px;width:1px;height:29px;background:#000000"></div>
<div class="t" style="left:419.00px;top:9px;font-weight:bold;transform:scaleX(0.9655);transform-origin:0 0;">CSYS</div>
<div style="left:476px;top:0px;width:87px;height:29px;background:#d4d0c8"></div>
<div style="left:476px;top:0px;width:87px;height:1px;background:#ffffff"></div>
<div style="left:476px;top:0px;width:1px;height:29px;background:#ffffff"></div>
<div style="left:476px;top:28px;width:87px;height:1px;background:#000000"></div>
<div style="left:562px;top:0px;width:1px;height:29px;background:#000000"></div>
<div class="t" style="left:493.86px;top:3px;font-weight:bold;transform:scaleX(1.1395);transform-origin:0 0;">Rotation</div>
<div class="t" style="left:504.00px;top:16px;font-weight:bold;transform:scaleX(1.0667);transform-origin:0 0;">Angle</div>
<div style="left:563px;top:0px;width:72px;height:29px;background:#d4d0c8"></div>
<div style="left:563px;top:0px;width:72px;height:1px;background:#ffffff"></div>
<div style="left:563px;top:0px;width:1px;height:29px;background:#ffffff"></div>
<div style="left:563px;top:28px;width:72px;height:1px;background:#000000"></div>
<div style="left:634px;top:0px;width:1px;height:29px;background:#000000"></div>
<div class="t" style="left:565.84px;top:3px;font-weight:bold;transform:scaleX(1.1636);transform-origin:0 0;">Integration</div>
<div class="t" style="left:580.94px;top:16px;font-weight:bold;transform:scaleX(1.0625);transform-origin:0 0;">Points</div>
<div style="left:21px;top:29px;width:614px;height:1px;background:#d4d0c8"></div>
<div style="left:21px;top:29px;width:1px;height:20px;background:#d4d0c8"></div>
<div style="left:41px;top:29px;width:1px;height:20px;background:#d4d0c8"></div>
<div style="left:128px;top:29px;width:1px;height:20px;background:#d4d0c8"></div>
<div style="left:215px;top:29px;width:1px;height:20px;background:#d4d0c8"></div>
<div style="left:302px;top:29px;width:1px;height:20px;background:#d4d0c8"></div>
<div style="left:389px;top:29px;width:1px;height:20px;background:#d4d0c8"></div>
<div style="left:476px;top:29px;width:1px;height:20px;background:#d4d0c8"></div>
<div style="left:563px;top:29px;width:1px;height:20px;background:#d4d0c8"></div>
<div style="left:0px;top:29px;width:21px;height:20px;background:#d4d0c8"></div>
<div style="left:0px;top:29px;width:21px;height:1px;background:#ffffff"></div>
<div style="left:0px;top:29px;width:1px;height:20px;background:#ffffff"></div>
<div style="left:0px;top:48px;width:21px;height:1px;background:#000000"></div>
<div style="left:20px;top:29px;width:1px;height:20px;background:#000000"></div>
<div class="t" style="left:7.00px;top:34px;font-weight:bold;transform:scaleX(1.0000);transform-origin:0 0;-webkit-text-stroke:0.35px #000;">1</div>
<svg style="left:26px;top:34px" width="11" height="10" shape-rendering="crispEdges"><rect x="10" y="0" width="1" height="1" fill="#008000"/><rect x="9" y="1" width="2" height="1" fill="#008000"/><rect x="8" y="2" width="2" height="1" fill="#008000"/><rect x="1" y="3" width="1" height="1" fill="#008000"/><rect x="7" y="3" width="2" height="1" fill="#008000"/><rect x="0" y="4" width="2" height="1" fill="#008000"/><rect x="6" y="4" width="2" height="1" fill="#008000"/><rect x="0" y="5" width="3" height="1" fill="#008000"/><rect x="5" y="5" width="2" height="1" fill="#008000"/><rect x="0" y="6" width="4" height="1" fill="#008000"/><rect x="4" y="6" width="2" height="1" fill="#008000"/><rect x="0" y="7" width="5" height="1" fill="#008000"/><rect x="1" y="8" width="3" height="1" fill="#008000"/><rect x="2" y="9" width="1" height="1" fill="#008000"/></svg>
<div class="t" style="left:71.95px;top:34px;transform:scaleX(1.0455);transform-origin:0 0;">Ply.1</div>
<div class="t" style="left:156.00px;top:34px;transform:scaleX(0.9677);transform-origin:0 0;">Zone6</div>
<div class="t" style="left:220.01px;top:34px;transform:scaleX(0.9867);transform-origin:0 0;">Graphite-Epoxy</div>
<div class="t" style="left:337.00px;top:34px;transform:scaleX(1.0667);transform-origin:0 0;">0.2</div>
<div class="t" style="left:409.95px;top:34px;transform:scaleX(1.0476);transform-origin:0 0;">&lt;Layup&gt;</div>
<div class="t" style="left:513.00px;top:34px;transform:scaleX(1.0000);transform-origin:0 0;">90</div>
<div class="t" style="left:595.00px;top:34px;transform:scaleX(1.0000);transform-origin:0 0;">3</div>
<div style="left:21px;top:49px;width:614px;height:1px;background:#d4d0c8"></div>
<div style="left:21px;top:49px;width:1px;height:20px;background:#d4d0c8"></div>
<div style="left:41px;top:49px;width:1px;height:20px;background:#d4d0c8"></div>
<div style="left:128px;top:49px;width:1px;height:20px;background:#d4d0c8"></div>
<div style="left:215px;top:49px;width:1px;height:20px;background:#d4d0c8"></div>
<div style="left:302px;top:49px;width:1px;height:20px;background:#d4d0c8"></div>
<div style="left:389px;top:49px;width:1px;height:20px;background:#d4d0c8"></div>
<div style="left:476px;top:49px;width:1px;height:20px;background:#d4d0c8"></div>
<div style="left:563px;top:49px;width:1px;height:20px;background:#d4d0c8"></div>
<div style="left:0px;top:49px;width:21px;height:20px;background:#d4d0c8"></div>
<div style="left:0px;top:49px;width:21px;height:1px;background:#ffffff"></div>
<div style="left:0px;top:49px;width:1px;height:20px;background:#ffffff"></div>
<div style="left:0px;top:68px;width:21px;height:1px;background:#000000"></div>
<div style="left:20px;top:49px;width:1px;height:20px;background:#000000"></div>
<div class="t" style="left:7.00px;top:54px;font-weight:bold;transform:scaleX(1.0000);transform-origin:0 0;-webkit-text-stroke:0.35px #000;">2</div>
<svg style="left:26px;top:54px" width="11" height="10" shape-rendering="crispEdges"><rect x="10" y="0" width="1" height="1" fill="#008000"/><rect x="9" y="1" width="2" height="1" fill="#008000"/><rect x="8" y="2" width="2" height="1" fill="#008000"/><rect x="1" y="3" width="1" height="1" fill="#008000"/><rect x="7" y="3" width="2" height="1" fill="#008000"/><rect x="0" y="4" width="2" height="1" fill="#008000"/><rect x="6" y="4" width="2" height="1" fill="#008000"/><rect x="0" y="5" width="3" height="1" fill="#008000"/><rect x="5" y="5" width="2" height="1" fill="#008000"/><rect x="0" y="6" width="4" height="1" fill="#008000"/><rect x="4" y="6" width="2" height="1" fill="#008000"/><rect x="0" y="7" width="5" height="1" fill="#008000"/><rect x="1" y="8" width="3" height="1" fill="#008000"/><rect x="2" y="9" width="1" height="1" fill="#008000"/></svg>
<div class="t" style="left:71.95px;top:54px;transform:scaleX(1.0455);transform-origin:0 0;">Ply.2</div>
<div class="t" style="left:156.00px;top:54px;transform:scaleX(0.9677);transform-origin:0 0;">Zone6</div>
<div class="t" style="left:220.01px;top:54px;transform:scaleX(0.9867);transform-origin:0 0;">Graphite-Epoxy</div>
<div class="t" style="left:337.00px;top:54px;transform:scaleX(1.0667);transform-origin:0 0;">0.2</div>
<div class="t" style="left:409.95px;top:54px;transform:scaleX(1.0476);transform-origin:0 0;">&lt;Layup&gt;</div>
<div class="t" style="left:513.00px;top:54px;transform:scaleX(1.0000);transform-origin:0 0;">90</div>
<div class="t" style="left:595.00px;top:54px;transform:scaleX(1.0000);transform-origin:0 0;">3</div>
<div style="left:21px;top:69px;width:614px;height:1px;background:#d4d0c8"></div>
<div style="left:21px;top:69px;width:1px;height:20px;background:#d4d0c8"></div>
<div style="left:41px;top:69px;width:1px;height:20px;background:#d4d0c8"></div>
<div style="left:128px;top:69px;width:1px;height:20px;background:#d4d0c8"></div>
<div style="left:215px;top:69px;width:1px;height:20px;background:#d4d0c8"></div>
<div style="left:302px;top:69px;width:1px;height:20px;background:#d4d0c8"></div>
<div style="left:389px;top:69px;width:1px;height:20px;background:#d4d0c8"></div>
<div style="left:476px;top:69px;width:1px;height:20px;background:#d4d0c8"></div>
<div style="left:563px;top:69px;width:1px;height:20px;background:#d4d0c8"></div>
<div style="left:0px;top:69px;width:21px;height:20px;background:#d4d0c8"></div>
<div style="left:0px;top:69px;width:21px;height:1px;background:#ffffff"></div>
<div style="left:0px;top:69px;width:1px;height:20px;background:#ffffff"></div>
<div style="left:0px;top:88px;width:21px;height:1px;background:#000000"></div>
<div style="left:20px;top:69px;width:1px;height:20px;background:#000000"></div>
<div class="t" style="left:5.80px;top:74px;font-weight:bold;transform:scaleX(1.2000);transform-origin:0 0;-webkit-text-stroke:0.35px #000;">3</div>
<svg style="left:26px;top:74px" width="11" height="10" shape-rendering="crispEdges"><rect x="10" y="0" width="1" height="1" fill="#008000"/><rect x="9" y="1" width="2" height="1" fill="#008000"/><rect x="8" y="2" width="2" height="1" fill="#008000"/><rect x="1" y="3" width="1" height="1" fill="#008000"/><rect x="7" y="3" width="2" height="1" fill="#008000"/><rect x="0" y="4" width="2" height="1" fill="#008000"/><rect x="6" y="4" width="2" height="1" fill="#008000"/><rect x="0" y="5" width="3" height="1" fill="#008000"/><rect x="5" y="5" width="2" height="1" fill="#008000"/><rect x="0" y="6" width="4" height="1" fill="#008000"/><rect x="4" y="6" width="2" height="1" fill="#008000"/><rect x="0" y="7" width="5" height="1" fill="#008000"/><rect x="1" y="8" width="3" height="1" fill="#008000"/><rect x="2" y="9" width="1" height="1" fill="#008000"/></svg>
<div class="t" style="left:71.95px;top:74px;transform:scaleX(1.0455);transform-origin:0 0;">Ply.3</div>
<div class="t" style="left:156.00px;top:74px;transform:scaleX(0.9677);transform-origin:0 0;">Zone6</div>
<div class="t" style="left:220.01px;top:74px;transform:scaleX(0.9867);transform-origin:0 0;">Graphite-Epoxy</div>
<div class="t" style="left:337.00px;top:74px;transform:scaleX(1.0667);transform-origin:0 0;">0.2</div>
<div class="t" style="left:409.95px;top:74px;transform:scaleX(1.0476);transform-origin:0 0;">&lt;Layup&gt;</div>
<div class="t" style="left:513.00px;top:74px;transform:scaleX(1.0000);transform-origin:0 0;">90</div>
<div class="t" style="left:595.00px;top:74px;transform:scaleX(1.0000);transform-origin:0 0;">3</div>
<div style="left:21px;top:89px;width:614px;height:1px;background:#d4d0c8"></div>
<div style="left:21px;top:89px;width:1px;height:20px;background:#d4d0c8"></div>
<div style="left:41px;top:89px;width:1px;height:20px;background:#d4d0c8"></div>
<div style="left:128px;top:89px;width:1px;height:20px;background:#d4d0c8"></div>
<div style="left:215px;top:89px;width:1px;height:20px;background:#d4d0c8"></div>
<div style="left:302px;top:89px;width:1px;height:20px;background:#d4d0c8"></div>
<div style="left:389px;top:89px;width:1px;height:20px;background:#d4d0c8"></div>
<div style="left:476px;top:89px;width:1px;height:20px;background:#d4d0c8"></div>
<div style="left:563px;top:89px;width:1px;height:20px;background:#d4d0c8"></div>
<div style="left:22px;top:90px;width:19px;height:19px;background:#0a246a"></div>
<div style="left:42px;top:90px;width:86px;height:19px;background:#0a246a"></div>
<div style="left:129px;top:90px;width:86px;height:19px;background:#0a246a"></div>
<div style="left:216px;top:90px;width:86px;height:19px;background:#0a246a"></div>
<div style="left:303px;top:90px;width:86px;height:19px;background:#0a246a"></div>
<div style="left:390px;top:90px;width:86px;height:19px;background:#0a246a"></div>
<div style="left:477px;top:90px;width:86px;height:19px;background:#0a246a"></div>
<div style="left:564px;top:90px;width:71px;height:19px;background:#0a246a"></div>
<div style="left:0px;top:89px;width:21px;height:20px;background:#d4d0c8"></div>
<div style="left:1px;top:90px;width:19px;height:1px;background:#808080"></div>
<div style="left:1px;top:90px;width:1px;height:18px;background:#808080"></div>
<div style="left:2px;top:91px;width:18px;height:1px;background:#000000"></div>
<div style="left:2px;top:91px;width:1px;height:17px;background:#000000"></div>
<div style="left:20px;top:89px;width:1px;height:20px;background:repeating-linear-gradient(180deg,#000 0 1px,#fff 1px 2px)"></div>
<div style="left:0px;top:108px;width:21px;height:1px;background:repeating-linear-gradient(90deg,#000 0 1px,#fff 1px 2px)"></div>
<div class="t" style="left:7.00px;top:94px;font-weight:bold;transform:scaleX(1.0000);transform-origin:0 0;-webkit-text-stroke:0.35px #000;">4</div>
<svg style="left:26px;top:94px" width="11" height="10" shape-rendering="crispEdges"><rect x="10" y="0" width="1" height="1" fill="#008000"/><rect x="9" y="1" width="2" height="1" fill="#008000"/><rect x="8" y="2" width="2" height="1" fill="#008000"/><rect x="1" y="3" width="1" height="1" fill="#008000"/><rect x="7" y="3" width="2" height="1" fill="#008000"/><rect x="0" y="4" width="2" height="1" fill="#008000"/><rect x="6" y="4" width="2" height="1" fill="#008000"/><rect x="0" y="5" width="3" height="1" fill="#008000"/><rect x="5" y="5" width="2" height="1" fill="#008000"/><rect x="0" y="6" width="4" height="1" fill="#008000"/><rect x="4" y="6" width="2" height="1" fill="#008000"/><rect x="0" y="7" width="5" height="1" fill="#008000"/><rect x="1" y="8" width="3" height="1" fill="#008000"/><rect x="2" y="9" width="1" height="1" fill="#008000"/></svg>
<div class="t" style="left:71.95px;top:94px;transform:scaleX(1.0455);transform-origin:0 0;color:#fff;">Ply.4</div>
<div class="t" style="left:156.00px;top:94px;transform:scaleX(0.9677);transform-origin:0 0;color:#fff;">Zone6</div>
<div class="t" style="left:220.01px;top:94px;transform:scaleX(0.9867);transform-origin:0 0;color:#fff;">Graphite-Epoxy</div>
<div class="t" style="left:337.00px;top:94px;transform:scaleX(1.0667);transform-origin:0 0;color:#fff;">0.2</div>
<div class="t" style="left:409.95px;top:94px;transform:scaleX(1.0476);transform-origin:0 0;color:#fff;">&lt;Layup&gt;</div>
<div class="t" style="left:513.00px;top:94px;transform:scaleX(1.0000);transform-origin:0 0;color:#fff;">90</div>
<div class="t" style="left:595.00px;top:94px;transform:scaleX(1.0000);transform-origin:0 0;color:#fff;">3</div>
<div style="left:21px;top:109px;width:614px;height:1px;background:#d4d0c8"></div>
<div style="left:21px;top:109px;width:1px;height:20px;background:#d4d0c8"></div>
<div style="left:41px;top:109px;width:1px;height:20px;background:#d4d0c8"></div>
<div style="left:128px;top:109px;width:1px;height:20px;background:#d4d0c8"></div>
<div style="left:215px;top:109px;width:1px;height:20px;background:#d4d0c8"></div>
<div style="left:302px;top:109px;width:1px;height:20px;background:#d4d0c8"></div>
<div style="left:389px;top:109px;width:1px;height:20px;background:#d4d0c8"></div>
<div style="left:476px;top:109px;width:1px;height:20px;background:#d4d0c8"></div>
<div style="left:563px;top:109px;width:1px;height:20px;background:#d4d0c8"></div>
<div style="left:0px;top:109px;width:21px;height:20px;background:#d4d0c8"></div>
<div style="left:0px;top:109px;width:21px;height:1px;background:#ffffff"></div>
<div style="left:0px;top:109px;width:1px;height:20px;background:#ffffff"></div>
<div style="left:0px;top:128px;width:21px;height:1px;background:#000000"></div>
<div style="left:20px;top:109px;width:1px;height:20px;background:#000000"></div>
<div class="t" style="left:5.80px;top:114px;font-weight:bold;transform:scaleX(1.2000);transform-origin:0 0;-webkit-text-stroke:0.35px #000;">5</div>
<svg style="left:26px;top:114px" width="11" height="10" shape-rendering="crispEdges"><rect x="10" y="0" width="1" height="1" fill="#008000"/><rect x="9" y="1" width="2" height="1" fill="#008000"/><rect x="8" y="2" width="2" height="1" fill="#008000"/><rect x="1" y="3" width="1" height="1" fill="#008000"/><rect x="7" y="3" width="2" height="1" fill="#008000"/><rect x="0" y="4" width="2" height="1" fill="#008000"/><rect x="6" y="4" width="2" height="1" fill="#008000"/><rect x="0" y="5" width="3" height="1" fill="#008000"/><rect x="5" y="5" width="2" height="1" fill="#008000"/><rect x="0" y="6" width="4" height="1" fill="#008000"/><rect x="4" y="6" width="2" height="1" fill="#008000"/><rect x="0" y="7" width="5" height="1" fill="#008000"/><rect x="1" y="8" width="3" height="1" fill="#008000"/><rect x="2" y="9" width="1" height="1" fill="#008000"/></svg>
<div class="t" style="left:71.95px;top:114px;transform:scaleX(1.0455);transform-origin:0 0;">Ply.5</div>
<div class="t" style="left:156.00px;top:114px;transform:scaleX(0.9677);transform-origin:0 0;">Zone6</div>
<div class="t" style="left:220.01px;top:114px;transform:scaleX(0.9867);transform-origin:0 0;">Graphite-Epoxy</div>
<div class="t" style="left:337.00px;top:114px;transform:scaleX(1.0667);transform-origin:0 0;">0.2</div>
<div class="t" style="left:409.95px;top:114px;transform:scaleX(1.0476);transform-origin:0 0;">&lt;Layup&gt;</div>
<div class="t" style="left:513.00px;top:114px;transform:scaleX(1.0000);transform-origin:0 0;">90</div>
<div class="t" style="left:595.00px;top:114px;transform:scaleX(1.0000);transform-origin:0 0;">3</div>
<div style="left:21px;top:129px;width:614px;height:1px;background:#d4d0c8"></div>
<div style="left:21px;top:129px;width:1px;height:20px;background:#d4d0c8"></div>
<div style="left:41px;top:129px;width:1px;height:20px;background:#d4d0c8"></div>
<div style="left:128px;top:129px;width:1px;height:20px;background:#d4d0c8"></div>
<div style="left:215px;top:129px;width:1px;height:20px;background:#d4d0c8"></div>
<div style="left:302px;top:129px;width:1px;height:20px;background:#d4d0c8"></div>
<div style="left:389px;top:129px;width:1px;height:20px;background:#d4d0c8"></div>
<div style="left:476px;top:129px;width:1px;height:20px;background:#d4d0c8"></div>
<div style="left:563px;top:129px;width:1px;height:20px;background:#d4d0c8"></div>
<div style="left:0px;top:129px;width:21px;height:20px;background:#d4d0c8"></div>
<div style="left:0px;top:129px;width:21px;height:1px;background:#ffffff"></div>
<div style="left:0px;top:129px;width:1px;height:20px;background:#ffffff"></div>
<div style="left:0px;top:148px;width:21px;height:1px;background:#000000"></div>
<div style="left:20px;top:129px;width:1px;height:20px;background:#000000"></div>
<div class="t" style="left:7.00px;top:134px;font-weight:bold;transform:scaleX(1.0000);transform-origin:0 0;-webkit-text-stroke:0.35px #000;">6</div>
<svg style="left:26px;top:134px" width="11" height="10" shape-rendering="crispEdges"><rect x="10" y="0" width="1" height="1" fill="#008000"/><rect x="9" y="1" width="2" height="1" fill="#008000"/><rect x="8" y="2" width="2" height="1" fill="#008000"/><rect x="1" y="3" width="1" height="1" fill="#008000"/><rect x="7" y="3" width="2" height="1" fill="#008000"/><rect x="0" y="4" width="2" height="1" fill="#008000"/><rect x="6" y="4" width="2" height="1" fill="#008000"/><rect x="0" y="5" width="3" height="1" fill="#008000"/><rect x="5" y="5" width="2" height="1" fill="#008000"/><rect x="0" y="6" width="4" height="1" fill="#008000"/><rect x="4" y="6" width="2" height="1" fill="#008000"/><rect x="0" y="7" width="5" height="1" fill="#008000"/><rect x="1" y="8" width="3" height="1" fill="#008000"/><rect x="2" y="9" width="1" height="1" fill="#008000"/></svg>
<div class="t" style="left:71.95px;top:134px;transform:scaleX(1.0455);transform-origin:0 0;">Ply.6</div>
<div class="t" style="left:153.00px;top:134px;transform:scaleX(0.9737);transform-origin:0 0;">Zone5A</div>
<div class="t" style="left:220.01px;top:134px;transform:scaleX(0.9867);transform-origin:0 0;">Graphite-Epoxy</div>
<div class="t" style="left:337.00px;top:134px;transform:scaleX(1.0667);transform-origin:0 0;">0.2</div>
<div class="t" style="left:409.95px;top:134px;transform:scaleX(1.0476);transform-origin:0 0;">&lt;Layup&gt;</div>
<div class="t" style="left:510.86px;top:134px;transform:scaleX(1.1429);transform-origin:0 0;">-45</div>
<div class="t" style="left:595.00px;top:134px;transform:scaleX(1.0000);transform-origin:0 0;">3</div>
<div style="left:21px;top:149px;width:614px;height:1px;background:#d4d0c8"></div>
<div style="left:21px;top:149px;width:1px;height:20px;background:#d4d0c8"></div>
<div style="left:41px;top:149px;width:1px;height:20px;background:#d4d0c8"></div>
<div style="left:128px;top:149px;width:1px;height:20px;background:#d4d0c8"></div>
<div style="left:215px;top:149px;width:1px;height:20px;background:#d4d0c8"></div>
<div style="left:302px;top:149px;width:1px;height:20px;background:#d4d0c8"></div>
<div style="left:389px;top:149px;width:1px;height:20px;background:#d4d0c8"></div>
<div style="left:476px;top:149px;width:1px;height:20px;background:#d4d0c8"></div>
<div style="left:563px;top:149px;width:1px;height:20px;background:#d4d0c8"></div>
<div style="left:0px;top:149px;width:21px;height:20px;background:#d4d0c8"></div>
<div style="left:0px;top:149px;width:21px;height:1px;background:#ffffff"></div>
<div style="left:0px;top:149px;width:1px;height:20px;background:#ffffff"></div>
<div style="left:0px;top:168px;width:21px;height:1px;background:#000000"></div>
<div style="left:20px;top:149px;width:1px;height:20px;background:#000000"></div>
<div class="t" style="left:7.00px;top:154px;font-weight:bold;transform:scaleX(1.0000);transform-origin:0 0;-webkit-text-stroke:0.35px #000;">7</div>
<svg style="left:26px;top:154px" width="11" height="10" shape-rendering="crispEdges"><rect x="10" y="0" width="1" height="1" fill="#008000"/><rect x="9" y="1" width="2" height="1" fill="#008000"/><rect x="8" y="2" width="2" height="1" fill="#008000"/><rect x="1" y="3" width="1" height="1" fill="#008000"/><rect x="7" y="3" width="2" height="1" fill="#008000"/><rect x="0" y="4" width="2" height="1" fill="#008000"/><rect x="6" y="4" width="2" height="1" fill="#008000"/><rect x="0" y="5" width="3" height="1" fill="#008000"/><rect x="5" y="5" width="2" height="1" fill="#008000"/><rect x="0" y="6" width="4" height="1" fill="#008000"/><rect x="4" y="6" width="2" height="1" fill="#008000"/><rect x="0" y="7" width="5" height="1" fill="#008000"/><rect x="1" y="8" width="3" height="1" fill="#008000"/><rect x="2" y="9" width="1" height="1" fill="#008000"/></svg>
<div class="t" style="left:71.95px;top:154px;transform:scaleX(1.0455);transform-origin:0 0;">Ply.7</div>
<div class="t" style="left:153.00px;top:154px;transform:scaleX(0.9737);transform-origin:0 0;">Zone5A</div>
<div class="t" style="left:220.01px;top:154px;transform:scaleX(0.9867);transform-origin:0 0;">Graphite-Epoxy</div>
<div class="t" style="left:337.00px;top:154px;transform:scaleX(1.0667);transform-origin:0 0;">0.2</div>
<div class="t" style="left:409.95px;top:154px;transform:scaleX(1.0476);transform-origin:0 0;">&lt;Layup&gt;</div>
<div class="t" style="left:510.86px;top:154px;transform:scaleX(1.1429);transform-origin:0 0;">-45</div>
<div class="t" style="left:595.00px;top:154px;transform:scaleX(1.0000);transform-origin:0 0;">3</div>
<div style="left:21px;top:169px;width:614px;height:1px;background:#d4d0c8"></div>
<div style="left:21px;top:169px;width:1px;height:20px;background:#d4d0c8"></div>
<div style="left:41px;top:169px;width:1px;height:20px;background:#d4d0c8"></div>
<div style="left:128px;top:169px;width:1px;height:20px;background:#d4d0c8"></div>
<div style="left:215px;top:169px;width:1px;height:20px;background:#d4d0c8"></div>
<div style="left:302px;top:169px;width:1px;height:20px;background:#d4d0c8"></div>
<div style="left:389px;top:169px;width:1px;height:20px;background:#d4d0c8"></div>
<div style="left:476px;top:169px;width:1px;height:20px;background:#d4d0c8"></div>
<div style="left:563px;top:169px;width:1px;height:20px;background:#d4d0c8"></div>
<div style="left:0px;top:169px;width:21px;height:20px;background:#d4d0c8"></div>
<div style="left:0px;top:169px;width:21px;height:1px;background:#ffffff"></div>
<div style="left:0px;top:169px;width:1px;height:20px;background:#ffffff"></div>
<div style="left:0px;top:188px;width:21px;height:1px;background:#000000"></div>
<div style="left:20px;top:169px;width:1px;height:20px;background:#000000"></div>
<div class="t" style="left:7.00px;top:174px;font-weight:bold;transform:scaleX(1.0000);transform-origin:0 0;-webkit-text-stroke:0.35px #000;">8</div>
<svg style="left:26px;top:174px" width="11" height="10" shape-rendering="crispEdges"><rect x="10" y="0" width="1" height="1" fill="#008000"/><rect x="9" y="1" width="2" height="1" fill="#008000"/><rect x="8" y="2" width="2" height="1" fill="#008000"/><rect x="1" y="3" width="1" height="1" fill="#008000"/><rect x="7" y="3" width="2" height="1" fill="#008000"/><rect x="0" y="4" width="2" height="1" fill="#008000"/><rect x="6" y="4" width="2" height="1" fill="#008000"/><rect x="0" y="5" width="3" height="1" fill="#008000"/><rect x="5" y="5" width="2" height="1" fill="#008000"/><rect x="0" y="6" width="4" height="1" fill="#008000"/><rect x="4" y="6" width="2" height="1" fill="#008000"/><rect x="0" y="7" width="5" height="1" fill="#008000"/><rect x="1" y="8" width="3" height="1" fill="#008000"/><rect x="2" y="9" width="1" height="1" fill="#008000"/></svg>
<div class="t" style="left:71.95px;top:174px;transform:scaleX(1.0455);transform-origin:0 0;">Ply.8</div>
<div class="t" style="left:153.00px;top:174px;transform:scaleX(0.9737);transform-origin:0 0;">Zone5A</div>
<div class="t" style="left:220.01px;top:174px;transform:scaleX(0.9867);transform-origin:0 0;">Graphite-Epoxy</div>
<div class="t" style="left:337.00px;top:174px;transform:scaleX(1.0667);transform-origin:0 0;">0.2</div>
<div class="t" style="left:409.95px;top:174px;transform:scaleX(1.0476);transform-origin:0 0;">&lt;Layup&gt;</div>
<div class="t" style="left:514.00px;top:174px;transform:scaleX(1.0000);transform-origin:0 0;">45</div>
<div class="t" style="left:595.00px;top:174px;transform:scaleX(1.0000);transform-origin:0 0;">3</div>
<div style="left:21px;top:189px;width:614px;height:1px;background:#d4d0c8"></div>
<div style="left:21px;top:189px;width:1px;height:20px;background:#d4d0c8"></div>
<div style="left:41px;top:189px;width:1px;height:20px;background:#d4d0c8"></div>
<div style="left:128px;top:189px;width:1px;height:20px;background:#d4d0c8"></div>
<div style="left:215px;top:189px;width:1px;height:20px;background:#d4d0c8"></div>
<div style="left:302px;top:189px;width:1px;height:20px;background:#d4d0c8"></div>
<div style="left:389px;top:189px;width:1px;height:20px;background:#d4d0c8"></div>
<div style="left:476px;top:189px;width:1px;height:20px;background:#d4d0c8"></div>
<div style="left:563px;top:189px;width:1px;height:20px;background:#d4d0c8"></div>
<div style="left:0px;top:189px;width:21px;height:20px;background:#d4d0c8"></div>
<div style="left:0px;top:189px;width:21px;height:1px;background:#ffffff"></div>
<div style="left:0px;top:189px;width:1px;height:20px;background:#ffffff"></div>
<div style="left:0px;top:208px;width:21px;height:1px;background:#000000"></div>
<div style="left:20px;top:189px;width:1px;height:20px;background:#000000"></div>
<div class="t" style="left:7.00px;top:194px;font-weight:bold;transform:scaleX(1.0000);transform-origin:0 0;-webkit-text-stroke:0.35px #000;">9</div>
<svg style="left:26px;top:194px" width="11" height="10" shape-rendering="crispEdges"><rect x="10" y="0" width="1" height="1" fill="#008000"/><rect x="9" y="1" width="2" height="1" fill="#008000"/><rect x="8" y="2" width="2" height="1" fill="#008000"/><rect x="1" y="3" width="1" height="1" fill="#008000"/><rect x="7" y="3" width="2" height="1" fill="#008000"/><rect x="0" y="4" width="2" height="1" fill="#008000"/><rect x="6" y="4" width="2" height="1" fill="#008000"/><rect x="0" y="5" width="3" height="1" fill="#008000"/><rect x="5" y="5" width="2" height="1" fill="#008000"/><rect x="0" y="6" width="4" height="1" fill="#008000"/><rect x="4" y="6" width="2" height="1" fill="#008000"/><rect x="0" y="7" width="5" height="1" fill="#008000"/><rect x="1" y="8" width="3" height="1" fill="#008000"/><rect x="2" y="9" width="1" height="1" fill="#008000"/></svg>
<div class="t" style="left:71.95px;top:194px;transform:scaleX(1.0455);transform-origin:0 0;">Ply.9</div>
<div class="t" style="left:153.00px;top:194px;transform:scaleX(0.9737);transform-origin:0 0;">Zone5A</div>
<div class="t" style="left:220.01px;top:194px;transform:scaleX(0.9867);transform-origin:0 0;">Graphite-Epoxy</div>
<div class="t" style="left:337.00px;top:194px;transform:scaleX(1.0667);transform-origin:0 0;">0.2</div>
<div class="t" style="left:409.95px;top:194px;transform:scaleX(1.0476);transform-origin:0 0;">&lt;Layup&gt;</div>
<div class="t" style="left:510.86px;top:194px;transform:scaleX(1.1429);transform-origin:0 0;">-45</div>
<div class="t" style="left:595.00px;top:194px;transform:scaleX(1.0000);transform-origin:0 0;">3</div>
<div style="left:21px;top:209px;width:614px;height:1px;background:#d4d0c8"></div>
<div style="left:21px;top:209px;width:1px;height:20px;background:#d4d0c8"></div>
<div style="left:41px;top:209px;width:1px;height:20px;background:#d4d0c8"></div>
<div style="left:128px;top:209px;width:1px;height:20px;background:#d4d0c8"></div>
<div style="left:215px;top:209px;width:1px;height:20px;background:#d4d0c8"></div>
<div style="left:302px;top:209px;width:1px;height:20px;background:#d4d0c8"></div>
<div style="left:389px;top:209px;width:1px;height:20px;background:#d4d0c8"></div>
<div style="left:476px;top:209px;width:1px;height:20px;background:#d4d0c8"></div>
<div style="left:563px;top:209px;width:1px;height:20px;background:#d4d0c8"></div>
<div style="left:0px;top:209px;width:21px;height:20px;background:#d4d0c8"></div>
<div style="left:0px;top:209px;width:21px;height:1px;background:#ffffff"></div>
<div style="left:0px;top:209px;width:1px;height:20px;background:#ffffff"></div>
<div style="left:0px;top:228px;width:21px;height:1px;background:#000000"></div>
<div style="left:20px;top:209px;width:1px;height:20px;background:#000000"></div>
<div class="t" style="left:3.82px;top:214px;font-weight:bold;transform:scaleX(1.1818);transform-origin:0 0;-webkit-text-stroke:0.35px #000;">10</div>
<svg style="left:26px;top:214px" width="11" height="10" shape-rendering="crispEdges"><rect x="10" y="0" width="1" height="1" fill="#008000"/><rect x="9" y="1" width="2" height="1" fill="#008000"/><rect x="8" y="2" width="2" height="1" fill="#008000"/><rect x="1" y="3" width="1" height="1" fill="#008000"/><rect x="7" y="3" width="2" height="1" fill="#008000"/><rect x="0" y="4" width="2" height="1" fill="#008000"/><rect x="6" y="4" width="2" height="1" fill="#008000"/><rect x="0" y="5" width="3" height="1" fill="#008000"/><rect x="5" y="5" width="2" height="1" fill="#008000"/><rect x="0" y="6" width="4" height="1" fill="#008000"/><rect x="4" y="6" width="2" height="1" fill="#008000"/><rect x="0" y="7" width="5" height="1" fill="#008000"/><rect x="1" y="8" width="3" height="1" fill="#008000"/><rect x="2" y="9" width="1" height="1" fill="#008000"/></svg>
<div class="t" style="left:68.97px;top:214px;transform:scaleX(1.0345);transform-origin:0 0;">Ply.10</div>
<div class="t" style="left:153.00px;top:214px;transform:scaleX(0.9737);transform-origin:0 0;">Zone5A</div>
<div class="t" style="left:220.01px;top:214px;transform:scaleX(0.9867);transform-origin:0 0;">Graphite-Epoxy</div>
<div class="t" style="left:337.00px;top:214px;transform:scaleX(1.0667);transform-origin:0 0;">0.2</div>
<div class="t" style="left:409.95px;top:214px;transform:scaleX(1.0476);transform-origin:0 0;">&lt;Layup&gt;</div>
<div class="t" style="left:510.86px;top:214px;transform:scaleX(1.1429);transform-origin:0 0;">-45</div>
<div class="t" style="left:595.00px;top:214px;transform:scaleX(1.0000);transform-origin:0 0;">3</div>
<div style="left:21px;top:229px;width:614px;height:1px;background:#d4d0c8"></div>
<div style="left:21px;top:229px;width:1px;height:20px;background:#d4d0c8"></div>
<div style="left:41px;top:229px;width:1px;height:20px;background:#d4d0c8"></div>
<div style="left:128px;top:229px;width:1px;height:20px;background:#d4d0c8"></div>
<div style="left:215px;top:229px;width:1px;height:20px;background:#d4d0c8"></div>
<div style="left:302px;top:229px;width:1px;height:20px;background:#d4d0c8"></div>
<div style="left:389px;top:229px;width:1px;height:20px;background:#d4d0c8"></div>
<div style="left:476px;top:229px;width:1px;height:20px;background:#d4d0c8"></div>
<div style="left:563px;top:229px;width:1px;height:20px;background:#d4d0c8"></div>
<div style="left:0px;top:229px;width:21px;height:20px;background:#d4d0c8"></div>
<div style="left:0px;top:229px;width:21px;height:1px;background:#ffffff"></div>
<div style="left:0px;top:229px;width:1px;height:20px;background:#ffffff"></div>
<div style="left:0px;top:248px;width:21px;height:1px;background:#000000"></div>
<div style="left:20px;top:229px;width:1px;height:20px;background:#000000"></div>
<div class="t" style="left:3.80px;top:234px;font-weight:bold;transform:scaleX(1.2000);transform-origin:0 0;-webkit-text-stroke:0.35px #000;">11</div>
<svg style="left:26px;top:234px" width="11" height="10" shape-rendering="crispEdges"><rect x="10" y="0" width="1" height="1" fill="#008000"/><rect x="9" y="1" width="2" height="1" fill="#008000"/><rect x="8" y="2" width="2" height="1" fill="#008000"/><rect x="1" y="3" width="1" height="1" fill="#008000"/><rect x="7" y="3" width="2" height="1" fill="#008000"/><rect x="0" y="4" width="2" height="1" fill="#008000"/><rect x="6" y="4" width="2" height="1" fill="#008000"/><rect x="0" y="5" width="3" height="1" fill="#008000"/><rect x="5" y="5" width="2" height="1" fill="#008000"/><rect x="0" y="6" width="4" height="1" fill="#008000"/><rect x="4" y="6" width="2" height="1" fill="#008000"/><rect x="0" y="7" width="5" height="1" fill="#008000"/><rect x="1" y="8" width="3" height="1" fill="#008000"/><rect x="2" y="9" width="1" height="1" fill="#008000"/></svg>
<div class="t" style="left:68.89px;top:234px;transform:scaleX(1.1111);transform-origin:0 0;">Ply.11</div>
<div class="t" style="left:156.00px;top:234px;transform:scaleX(0.9677);transform-origin:0 0;">Zone9</div>
<div class="t" style="left:220.01px;top:234px;transform:scaleX(0.9867);transform-origin:0 0;">Graphite-Epoxy</div>
<div class="t" style="left:337.00px;top:234px;transform:scaleX(1.0667);transform-origin:0 0;">0.2</div>
<div class="t" style="left:409.95px;top:234px;transform:scaleX(1.0476);transform-origin:0 0;">&lt;Layup&gt;</div>
<div class="t" style="left:514.00px;top:234px;transform:scaleX(1.0000);transform-origin:0 0;">45</div>
<div class="t" style="left:595.00px;top:234px;transform:scaleX(1.0000);transform-origin:0 0;">3</div>
<div style="left:635px;top:0px;width:16px;height:239px;background:#d4d0c8"></div>
<div style="left:636px;top:15px;width:15px;height:209px;background-color:#fff;background-image:linear-gradient(45deg,#d4d0c8 25%,transparent 25%,transparent 75%,#d4d0c8 75%),linear-gradient(45deg,#d4d0c8 25%,transparent 25%,transparent 75%,#d4d0c8 75%);background-size:2px 2px;background-position:0 0,1px 1px;image-rendering:pixelated"></div>
<div style="left:636px;top:0px;width:15px;height:15px;background:#d4d0c8"></div>
<div style="left:637px;top:1px;width:13px;height:1px;background:#ffffff"></div>
<div style="left:637px;top:1px;width:1px;height:13px;background:#ffffff"></div>
<div style="left:636px;top:14px;width:15px;height:1px;background:#000000"></div>
<div style="left:650px;top:0px;width:1px;height:15px;background:#000000"></div>
<div style="left:638px;top:13px;width:12px;height:1px;background:#808080"></div>
<div style="left:649px;top:2px;width:1px;height:12px;background:#808080"></div>
<svg style="left:639px;top:4px" width="8" height="5" shape-rendering="crispEdges"><rect x="4" y="1" width="1" height="1" fill="#000000"/><rect x="3" y="2" width="3" height="1" fill="#000000"/><rect x="2" y="3" width="5" height="1" fill="#000000"/><rect x="1" y="4" width="7" height="1" fill="#000000"/></svg>
<div style="left:636px;top:15px;width:15px;height:45px;background:#d4d0c8"></div>
<div style="left:637px;top:16px;width:13px;height:1px;background:#ffffff"></div>
<div style="left:637px;top:16px;width:1px;height:43px;background:#ffffff"></div>
<div style="left:636px;top:59px;width:15px;height:1px;background:#000000"></div>
<div style="left:650px;top:15px;width:1px;height:45px;background:#000000"></div>
<div style="left:638px;top:58px;width:12px;height:1px;background:#808080"></div>
<div style="left:649px;top:17px;width:1px;height:42px;background:#808080"></div>
<div style="left:636px;top:224px;width:15px;height:15px;background:#d4d0c8"></div>
<div style="left:637px;top:225px;width:13px;height:1px;background:#ffffff"></div>
<div style="left:637px;top:225px;width:1px;height:13px;background:#ffffff"></div>
<div style="left:636px;top:238px;width:15px;height:1px;background:#000000"></div>
<div style="left:650px;top:224px;width:1px;height:15px;background:#000000"></div>
<div style="left:638px;top:237px;width:12px;height:1px;background:#808080"></div>
<div style="left:649px;top:226px;width:1px;height:12px;background:#808080"></div>
<svg style="left:639px;top:229px" width="8" height="5" shape-rendering="crispEdges"><rect x="1" y="0" width="7" height="1" fill="#000000"/><rect x="2" y="1" width="5" height="1" fill="#000000"/><rect x="3" y="2" width="3" height="1" fill="#000000"/><rect x="4" y="3" width="1" height="1" fill="#000000"/></svg>
</div>
<div style="left:147px;top:581px;width:53px;height:21px;background:#d4d0c8;"></div>
<div style="left:147px;top:581px;width:53px;height:1px;background:#ffffff;"></div>
<div style="left:147px;top:581px;width:1px;height:21px;background:#ffffff;"></div>
<div style="left:147px;top:601px;width:53px;height:1px;background:#000000;"></div>
<div style="left:199px;top:581px;width:1px;height:21px;background:#000000;"></div>
<div style="left:148px;top:600px;width:51px;height:1px;background:#808080;"></div>
<div style="left:198px;top:582px;width:1px;height:19px;background:#808080;"></div>
<div class="t" style="left:147px;top:586px;width:53px;text-align:center">OK</div>
<div style="left:482px;top:581px;width:53px;height:21px;background:#d4d0c8;"></div>
<div style="left:482px;top:581px;width:53px;height:1px;background:#ffffff;"></div>
<div style="left:482px;top:581px;width:1px;height:21px;background:#ffffff;"></div>
<div style="left:482px;top:601px;width:53px;height:1px;background:#000000;"></div>
<div style="left:534px;top:581px;width:1px;height:21px;background:#000000;"></div>
<div style="left:483px;top:600px;width:51px;height:1px;background:#808080;"></div>
<div style="left:533px;top:582px;width:1px;height:19px;background:#808080;"></div>
<div class="t" style="left:482px;top:586px;width:53px;text-align:center"></div>
<div class="t" style="left:490.00px;top:586px;transform:scaleX(1.0000);transform-origin:0 0;">Cancel</div>
<div style="left:345px;top:437px;width:167px;height:198px;background:#d4d0c8;"></div>
<div style="left:347px;top:439px;width:18px;height:196px;background:linear-gradient(90deg,#ffffff 0%,#d4d0c8 100%)"></div>
<div style="left:345px;top:437px;width:167px;height:1px;background:#d4d0c8;"></div>
<div style="left:345px;top:437px;width:1px;height:198px;background:#d4d0c8;"></div>
<div style="left:346px;top:438px;width:165px;height:1px;background:#ffffff;"></div>
<div style="left:346px;top:438px;width:1px;height:197px;background:#ffffff;"></div>
<div style="left:511px;top:437px;width:1px;height:198px;background:#000000;"></div>
<div style="left:510px;top:438px;width:1px;height:197px;background:#808080;"></div>
<div style="left:345px;top:634px;width:167px;height:1px;background:#000000;"></div>
<div style="left:346px;top:633px;width:165px;height:1px;background:#808080;"></div>
<div class="t" style="left:368.06px;top:442px;transform:scaleX(0.9420);transform-origin:0 0;">Move Plies Up</div>
<div class="t" style="left:466.00px;top:442px;transform:scaleX(1.0769);transform-origin:0 0;">Alt+U</div>
<div class="t" style="left:368.04px;top:460px;transform:scaleX(0.9639);transform-origin:0 0;">Move Plies Down</div>
<div class="t" style="left:466.00px;top:460px;transform:scaleX(1.0370);transform-origin:0 0;">Alt+D</div>
<div class="t" style="left:368.03px;top:480px;transform:scaleX(0.9655);transform-origin:0 0;">Copy Plies Before</div>
<div class="t" style="left:467.00px;top:480px;transform:scaleX(1.0385);transform-origin:0 0;">Alt+B</div>
<div class="t" style="left:368.01px;top:498px;transform:scaleX(0.9870);transform-origin:0 0;">Copy Plies After</div>
<div class="t" style="left:466.00px;top:498px;transform:scaleX(1.0769);transform-origin:0 0;">Alt+A</div>
<div class="t" style="left:368.00px;top:516px;transform:scaleX(1.0000);transform-origin:0 0;">Insert Rows Before</div>
<div class="t" style="left:465.96px;top:516px;transform:scaleX(1.0385);transform-origin:0 0;">Ctl+B</div>
<div class="t" style="left:367.96px;top:534px;transform:scaleX(1.0366);transform-origin:0 0;">Insert Rows After</div>
<div class="t" style="left:464.92px;top:534px;transform:scaleX(1.0769);transform-origin:0 0;">Ctl+A</div>
<div class="t" style="left:368.04px;top:554px;transform:scaleX(0.9649);transform-origin:0 0;">Delete Plies</div>
<div class="t" style="left:464.92px;top:554px;transform:scaleX(1.0769);transform-origin:0 0;">Ctl+D</div>
<div class="t" style="left:367.99px;top:575px;transform:scaleX(1.0143);transform-origin:0 0;">Pattern Plies...</div>
<div class="t" style="left:467.00px;top:575px;transform:scaleX(1.0385);transform-origin:0 0;">Alt+P</div>
<div class="t" style="left:368.01px;top:597px;transform:scaleX(0.9880);transform-origin:0 0;">Read From File...</div>
<div class="t" style="left:466.00px;top:597px;transform:scaleX(1.0769);transform-origin:0 0;">Alt+R</div>
<div class="t" style="left:369.00px;top:618px;transform:scaleX(1.0290);transform-origin:0 0;">Write To File...</div>
<div class="t" style="left:463.00px;top:618px;transform:scaleX(1.0333);transform-origin:0 0;">Alt+W</div>
<div style="left:348px;top:475px;width:162px;height:1px;background:#808080;"></div>
<div style="left:348px;top:476px;width:162px;height:1px;background:#ffffff;"></div>
<div style="left:348px;top:570px;width:162px;height:1px;background:#808080;"></div>
<div style="left:348px;top:571px;width:162px;height:1px;background:#ffffff;"></div>
<div style="left:348px;top:590px;width:162px;height:1px;background:#808080;"></div>
<div style="left:348px;top:591px;width:162px;height:1px;background:#ffffff;"></div>
<svg style="left:350px;top:551px" width="15" height="15" viewBox="0 0 15 15" shape-rendering="crispEdges"><g shape-rendering="geometricPrecision" fill="#8c0010"><polygon points="1,1.8 3.6,1.1 14,12.8 13.3,13.9 1.7,3.9"/><polygon points="1.1,12.5 3.1,14.3 14,1.7 13.5,1 1.3,11.1"/></g></svg>
<svg style="left:350px;top:594px" width="17" height="17" viewBox="0 0 17 17" shape-rendering="crispEdges"><defs><pattern id="dy594" width="2" height="2" patternUnits="userSpaceOnUse"><rect width="2" height="2" fill="#ffff00"/><rect width="1" height="1" fill="#ffffff"/><rect x="1" y="1" width="1" height="1" fill="#ffffff"/></pattern></defs><g shape-rendering="crispEdges"><rect x="1" y="6" width="7" height="9" fill="url(#dy594)"/><rect x="0" y="5" width="1" height="11" fill="#000"/><rect x="0" y="15" width="15" height="1" fill="#000"/><rect x="0" y="5" width="3" height="1" fill="#000"/><rect x="3" y="4" width="4" height="1" fill="#000"/><rect x="1" y="6" width="1" height="9" fill="#ffff00"/></g><polygon points="3,8 15,8 13,15 1,15" fill="url(#dy594)" shape-rendering="crispEdges"/><g shape-rendering="crispEdges"><rect x="3" y="7" width="13" height="1" fill="#000"/><rect x="15" y="7" width="1" height="3" fill="#000"/><rect x="14" y="10" width="1" height="5" fill="#000"/><rect x="2" y="8" width="1" height="2" fill="#000"/></g><g shape-rendering="geometricPrecision"><path d="M8 7.5L14 1.5" stroke="#000" stroke-width="4"/><path d="M8.3 7.3L14 1.8" stroke="#00f000" stroke-width="2.4"/><path d="M10 0.5h6v6" stroke="#000" stroke-width="1" fill="none"/></g></svg>
<svg style="left:350px;top:614px" width="17" height="17" viewBox="0 0 17 17" shape-rendering="crispEdges"><defs><pattern id="dy614" width="2" height="2" patternUnits="userSpaceOnUse"><rect width="2" height="2" fill="#ffff00"/><rect width="1" height="1" fill="#ffffff"/><rect x="1" y="1" width="1" height="1" fill="#ffffff"/></pattern></defs><g shape-rendering="crispEdges"><rect x="1" y="6" width="7" height="9" fill="url(#dy614)"/><rect x="0" y="5" width="1" height="11" fill="#000"/><rect x="0" y="15" width="15" height="1" fill="#000"/><rect x="0" y="5" width="3" height="1" fill="#000"/><rect x="3" y="4" width="4" height="1" fill="#000"/><rect x="1" y="6" width="1" height="9" fill="#ffff00"/></g><polygon points="3,8 15,8 13,15 1,15" fill="url(#dy614)" shape-rendering="crispEdges"/><g shape-rendering="crispEdges"><rect x="3" y="7" width="13" height="1" fill="#000"/><rect x="15" y="7" width="1" height="3" fill="#000"/><rect x="14" y="10" width="1" height="5" fill="#000"/><rect x="2" y="8" width="1" height="2" fill="#000"/></g><g shape-rendering="geometricPrecision"><path d="M4 3L9 8" stroke="#000" stroke-width="4.2"/><path d="M4.3 3.2L9 7.8" stroke="#00f0f0" stroke-width="2.6"/><polygon points="11,2 11,9 4,9" fill="#00f0f0" stroke="#000" stroke-width="0.8"/></g></svg>
</body></html>
